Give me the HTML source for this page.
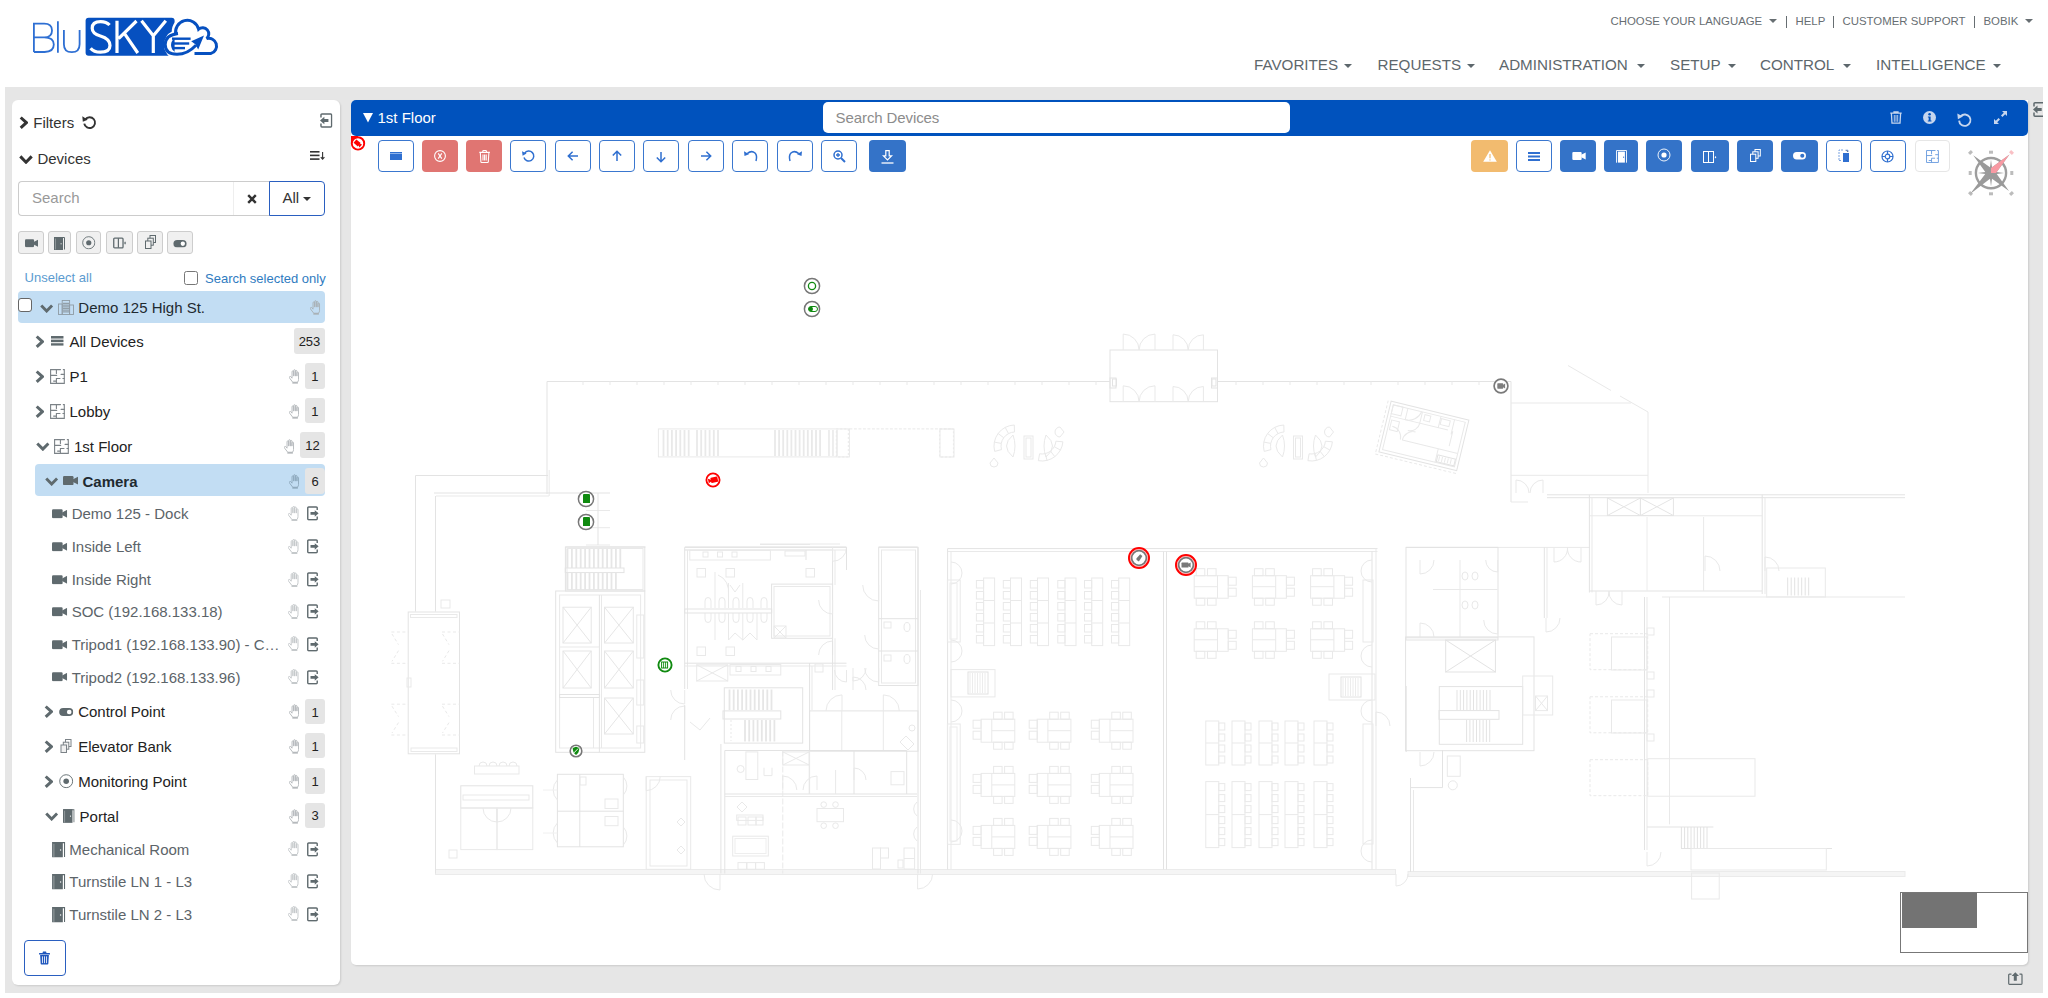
<!DOCTYPE html><html><head><meta charset="utf-8"><style>
*{box-sizing:border-box;margin:0;padding:0}
html,body{width:2048px;height:998px;overflow:hidden;background:#fff;font-family:"Liberation Sans",sans-serif;color:#333}
.a{position:absolute}
.t{position:absolute;white-space:nowrap;line-height:1}
.toplink{font-size:12px;color:#676e72;top:15px}
.nav{font-size:15px;color:#5d676c;top:57px}
.caret{position:absolute;width:0;height:0;border-left:4px solid transparent;border-right:4px solid transparent;border-top:4px solid #5d676c}
svg.i{position:absolute;overflow:visible}
.badge{position:absolute;background:#e5e5e5;border-radius:3px;font-size:13px;color:#222;text-align:center;line-height:26px;height:26px}
.tb{position:absolute;top:140px;width:36px;height:32px;border:1px solid #3b74c8;border-radius:4px;background:#fff}
.tbs{background:#3572c9;border-color:#3572c9}
.ib{position:absolute;top:231px;height:23px;background:#f0f0f0;border:1px solid #cdcdcd;border-radius:3px}
</style></head><body>

<svg width="0" height="0" style="position:absolute">
<defs>
<symbol id="chr" viewBox="0 0 9 13"><polyline points="1.7,1.3 7.4,6.5 1.7,11.7" fill="none" stroke="currentColor" stroke-width="3"/></symbol>
<symbol id="chd" viewBox="0 0 14 9"><polyline points="1.3,1.4 7,7.2 12.7,1.4" fill="none" stroke="currentColor" stroke-width="3"/></symbol>
<symbol id="cam" viewBox="0 0 15 9"><rect x="0" y="0" width="10.5" height="9" rx="1.2" fill="currentColor"/><path d="M10 3.2 L15 0.6 L15 8.4 L10 5.8Z" fill="currentColor"/></symbol>
<symbol id="lst" viewBox="0 0 13 10"><rect x="0" y="0" width="13" height="2.6" fill="currentColor"/><rect x="0" y="3.7" width="13" height="2.6" fill="currentColor"/><rect x="0" y="7.4" width="13" height="2.6" fill="currentColor"/></symbol>
<symbol id="flp" viewBox="0 0 15 15"><g fill="none" stroke="currentColor" stroke-width="1.1" stroke-linecap="round"><path d="M10.5 0.6H0.6V14.4H14.3V0.6H13.3"/><path d="M6.4 0.6V4.4M0.6 6.4H6.7M11.1 5.4H14.3M6.4 14.4V9.5H10M12.9 9.5H14.3M3.6 12.1H6.4"/></g></symbol>
<symbol id="hand" viewBox="0 0 11 15"><g fill="none" stroke="currentColor" stroke-width="1"><path d="M3.2 9 V2.6 Q3.2 1.6 4.05 1.6 Q4.9 1.6 4.9 2.6 V7.2 M4.9 6.8 V1.3 Q4.9 0.4 5.75 0.4 Q6.6 0.4 6.6 1.3 V7.2 M6.6 6.8 V1.9 Q6.6 1.1 7.45 1.1 Q8.3 1.1 8.3 1.9 V7.2 M8.3 7 V3.7 Q8.3 2.9 9.15 2.9 Q10 2.9 10 3.7 V10.6 Q10 12.2 9.1 13.2 M3.2 9.4 L2.3 8.1 Q1.4 7 0.6 7.7 Q0 8.3 0.7 9.3 L3.7 13.2"/></g><rect x="3.5" y="13" width="5.8" height="2" fill="currentColor"/></symbol>
<symbol id="sgn" viewBox="0 0 13 15"><path d="M10.8 4 V1.8 Q10.8 0.8 9.8 0.8 H1.8 Q0.8 0.8 0.8 1.8 V13.2 Q0.8 14.2 1.8 14.2 H9.8 Q10.8 14.2 10.8 13.2 V10.8" fill="none" stroke="currentColor" stroke-width="1.5"/><path d="M3.7 6.1 H8.2 V4.1 L12.3 7.5 L8.2 11 V8.9 H3.7Z" fill="currentColor"/></symbol><symbol id="sgnl" viewBox="0 0 13 15"><path d="M1 4.5 V1.8 Q1 0.8 2 0.8 H11 Q12 0.8 12 1.8 V13.2 Q12 14.2 11 14.2 H2 Q1 14.2 1 13.2 V10.5" fill="none" stroke="currentColor" stroke-width="1.5"/><path d="M0 7.5 L4.5 3.6 V6 H8.7 V9 H4.5 V11.4Z" fill="currentColor"/></symbol>
<symbol id="sgnr" viewBox="0 0 13 15"><path d="M5.2 0.8 H11.2 Q12.2 0.8 12.2 1.8 V13.2 Q12.2 14.2 11.2 14.2 H5.2 M3.4 0.8 H1.8 Q0.8 0.8 0.8 1.8 V4.8 M0.8 10.2 V13.2 Q0.8 14.2 1.8 14.2 H3.4" fill="none" stroke="currentColor" stroke-width="1.5"/><path d="M3 6.3 H6.8 V3.7 L11 7.5 L6.8 11.3 V8.7 H3Z" fill="currentColor"/></symbol>
<symbol id="tog" viewBox="0 0 14 8"><rect x="0" y="0" width="14" height="8" rx="4" fill="currentColor"/><circle cx="10" cy="4" r="2.3" fill="#fff"/></symbol>
<symbol id="dot" viewBox="0 0 14 14"><circle cx="7" cy="7" r="6.3" fill="none" stroke="currentColor" stroke-width="0.9"/><circle cx="7" cy="7" r="2.7" fill="currentColor"/></symbol>
<symbol id="door" viewBox="0 0 11 13"><path d="M0.5 0.5H10.5V12.5" fill="none" stroke="currentColor" stroke-width="1"/><rect x="0" y="0" width="9" height="13" fill="currentColor"/><path d="M1.5 1.5V12.5" stroke="#fff" stroke-width="0.6" opacity="0.5"/><rect x="6.6" y="6" width="1" height="1.4" fill="#fff" opacity="0.7"/></symbol>
<symbol id="elev" viewBox="0 0 14 12"><rect x="0.8" y="0.8" width="10" height="10.4" rx="1" fill="none" stroke="currentColor" stroke-width="1.4"/><path d="M5.8 0.8V11.2" stroke="currentColor" stroke-width="1.3"/><path d="M13 4L14 6L13 8L12 6Z" fill="currentColor"/></symbol>
<symbol id="clone" viewBox="0 0 11 14"><g fill="none" stroke="currentColor" stroke-width="1"><rect x="5" y="0.5" width="5.5" height="7"/><rect x="2.8" y="3.2" width="5.5" height="7" fill="#f0f0f0"/><rect x="0.5" y="6" width="5.5" height="7.5" fill="#f0f0f0"/></g></symbol>
<symbol id="bld" viewBox="0 0 16 15"><g fill="none" stroke="currentColor" stroke-width="0.9"><rect x="4.2" y="0.5" width="7.4" height="14"/><rect x="0.5" y="4" width="3.7" height="10.5"/><rect x="11.6" y="5" width="3.9" height="9.5"/><path d="M6 2.5V13M8 2.5V13M10 2.5V13M5 3.5H11M5 6H11M5 8.5H11M5 11H11"/></g></symbol>
<symbol id="times" viewBox="0 0 10 10"><path d="M1.2 1.2L8.8 8.8M8.8 1.2L1.2 8.8" stroke="currentColor" stroke-width="2.4"/></symbol>
<symbol id="refr" viewBox="0 0 15 14"><path d="M3.2 4.2 A5.3 5.3 0 1 1 2.2 8.4" fill="none" stroke="currentColor" stroke-width="1.9"/><path d="M0.3 1.2 L0.8 6.6 L5.6 4.6Z" fill="currentColor"/></symbol>
<symbol id="sort" viewBox="0 0 15 9"><g fill="currentColor"><rect x="0" y="0" width="9.5" height="1.6"/><rect x="0" y="3.6" width="9.5" height="1.6"/><rect x="0" y="7.3" width="9.5" height="1.6"/></g><path d="M12.6 1V8M10.8 6.2L12.6 8.2L14.4 6.2" fill="none" stroke="currentColor" stroke-width="1.1"/></symbol>
<symbol id="trash" viewBox="0 0 12 14"><g fill="currentColor"><rect x="0" y="1.6" width="12" height="1.6" rx="0.4"/><rect x="4" y="0" width="4" height="2" rx="0.5"/><path d="M1.2 3.8H10.8L10.2 13.2Q10.1 14 9.3 14H2.7Q1.9 14 1.8 13.2Z"/></g><g stroke="#fff" stroke-width="0.9"><path d="M3.8 5.2V12.6M6 5.2V12.6M8.2 5.2V12.6"/></g></symbol>
</defs></svg>

<svg class="i" style="left:0;top:0" width="230" height="70" viewBox="0 0 230 70">
<g fill="none" stroke="#2e6fd3" stroke-width="1.8">
<path d="M33.9 52 V23.6 H44.2 Q52 23.6 52 30.4 Q52 37.3 44.2 37.3 H33.9 M44.2 37.3 Q53.8 37.3 53.8 44.6 Q53.8 52 44.6 52 H33.9"/>
<path d="M57.9 21.3 V52.7"/>
<path d="M63.9 30.1 V44.2 Q63.9 52.2 71.8 52.2 Q79.6 52.2 79.6 44.2 V30.1"/>
</g>
<rect x="85.6" y="17.7" width="89" height="38" rx="3" fill="#0650c0"/>
<g fill="none" stroke="#fff" stroke-width="3.2">
<path d="M109.6 25 Q106.4 21.6 100.6 21.6 Q92.2 21.6 92.2 28.2 Q92.2 33.6 100.4 36 Q110 38.8 110 45.6 Q110 52.2 100.4 52.2 Q93.8 52.2 90.6 48.2"/>
<path d="M117 20.8 V53 M136.5 21 L118.6 38.6 M124.2 33.2 L137.8 53"/>
<path d="M141.5 20.8 L153.3 35.8 V53 M165.8 20.8 L153.3 35.8"/>
</g>
<g fill="none" stroke="#fff" stroke-width="7">
<path d="M175.8 34.5 A11.2 11.2 0 0 1 198 28"/>
<path d="M176.5 33.5 A11.8 11.8 0 1 0 190 50"/>
</g>
<g fill="none" stroke="#0650c0" stroke-width="3">
<path d="M175.9 34.8 A11.2 11.2 0 0 1 198.6 29.2 A5 5 0 0 1 206.6 38.6 A6.3 6.3 0 0 1 211 53.4 H194.5"/>
<path d="M178 33.4 Q165.2 35 165.2 44.5 Q165.2 54.3 177 54.3 Q187.5 54.3 196 45.2"/>
</g>
<g fill="#0650c0">
<path d="M204 35.6 L191.2 41.2 L195.3 44.2 L198.2 49.5Z"/>
<rect x="172" y="37.5" width="18.6" height="2.4"/><rect x="172" y="42.3" width="17.2" height="2.4"/><rect x="172" y="46.9" width="13" height="2.4"/>
</g>
</svg>
<div class="t" style="left:1610.5px;top:15.9px;font-size:11.4px;color:#676e72;font-weight:normal;">CHOOSE YOUR LANGUAGE</div>
<div class="caret" style="left:1769px;top:19px;border-top-color:#676e72"></div>
<div class="a" style="left:1785.5px;top:15.5px;width:1px;height:12px;background:#676e72"></div>
<div class="t" style="left:1795.5px;top:15.9px;font-size:11.4px;color:#676e72;font-weight:normal;">HELP</div>
<div class="a" style="left:1832.5px;top:15.5px;width:1px;height:12px;background:#676e72"></div>
<div class="t" style="left:1842.5px;top:15.9px;font-size:11.4px;color:#676e72;font-weight:normal;">CUSTOMER SUPPORT</div>
<div class="a" style="left:1974px;top:15.5px;width:1px;height:12px;background:#676e72"></div>
<div class="t" style="left:1983.5px;top:15.9px;font-size:11.4px;color:#676e72;font-weight:normal;">BOBIK</div>
<div class="caret" style="left:2025px;top:19px;border-top-color:#676e72"></div>
<div class="t" style="left:1254px;top:57.1px;font-size:15.2px;color:#5d676c;font-weight:normal;">FAVORITES</div>
<div class="caret" style="left:1344px;top:64px;border-top-color:#5d676c"></div>
<div class="t" style="left:1377.5px;top:57.1px;font-size:15.2px;color:#5d676c;font-weight:normal;">REQUESTS</div>
<div class="caret" style="left:1467px;top:64px;border-top-color:#5d676c"></div>
<div class="t" style="left:1499px;top:57.1px;font-size:15.2px;color:#5d676c;font-weight:normal;">ADMINISTRATION</div>
<div class="caret" style="left:1637px;top:64px;border-top-color:#5d676c"></div>
<div class="t" style="left:1670px;top:57.1px;font-size:15.2px;color:#5d676c;font-weight:normal;">SETUP</div>
<div class="caret" style="left:1728px;top:64px;border-top-color:#5d676c"></div>
<div class="t" style="left:1760px;top:57.1px;font-size:15.2px;color:#5d676c;font-weight:normal;">CONTROL</div>
<div class="caret" style="left:1843px;top:64px;border-top-color:#5d676c"></div>
<div class="t" style="left:1876px;top:57.1px;font-size:15.2px;color:#5d676c;font-weight:normal;">INTELLIGENCE</div>
<div class="caret" style="left:1993px;top:64px;border-top-color:#5d676c"></div>
<div class="a" style="left:5px;top:87px;width:2038px;height:906px;background:#e6e6e6"></div>
<div class="a" style="left:12px;top:100px;width:328px;height:885px;background:#fff;border-radius:6px;box-shadow:1px 1px 2px rgba(0,0,0,.12)"></div>
<svg class="i" style="left:18.6px;top:115.6px;color:#333" width="9" height="13.4"><use href="#chr"/></svg>
<div class="t" style="left:33.3px;top:115.2px;font-size:15px;color:#333;font-weight:normal;">Filters</div>
<svg class="i" style="left:81.8px;top:115px;color:#333" width="15.4" height="14.4"><use href="#refr"/></svg>
<svg class="i" style="left:320px;top:113px;color:#5f6a6e" width="12.6" height="15"><use href="#sgnl"/></svg>
<svg class="i" style="left:19px;top:155px;color:#333" width="14" height="9"><use href="#chd"/></svg>
<div class="t" style="left:37.4px;top:151.0px;font-size:15px;color:#333;font-weight:normal;">Devices</div>
<svg class="i" style="left:310px;top:151px;color:#333" width="15" height="9"><use href="#sort"/></svg>
<div class="a" style="left:18px;top:180.5px;width:252px;height:35px;border:1px solid #ccc;border-right:none;border-radius:4px 0 0 4px;background:#fff"></div>
<div class="a" style="left:233px;top:181.5px;width:1px;height:33px;background:#eee"></div>
<div class="t" style="left:32px;top:189.7px;font-size:15px;color:#999;font-weight:normal;">Search</div>
<svg class="i" style="left:246.5px;top:193.5px;color:#333" width="10" height="10"><use href="#times"/></svg>
<div class="a" style="left:269px;top:180.5px;width:56px;height:35px;border:1px solid #2a5fc0;border-radius:0 4px 4px 0;background:#fff"></div>
<div class="t" style="left:282.5px;top:189.9px;font-size:15px;color:#333;font-weight:normal;">All</div>
<div class="caret" style="left:303px;top:197px;border-top-color:#333;border-width:4px 4px 0 4px"></div>
<div class="ib" style="left:18px;width:26px"></div>
<div class="ib" style="left:48px;width:23px"></div>
<div class="ib" style="left:76px;width:25px"></div>
<div class="ib" style="left:106px;width:27px"></div>
<div class="ib" style="left:137px;width:26px"></div>
<div class="ib" style="left:167px;width:25.5px"></div>
<svg class="i" style="left:24.5px;top:238.5px;color:#5f6a6e" width="13" height="8.5"><use href="#cam"/></svg>
<svg class="i" style="left:54px;top:237px;color:#5f6a6e" width="11" height="13"><use href="#door"/></svg>
<svg class="i" style="left:81.5px;top:235.5px;color:#5f6a6e" width="13.5" height="13.5"><use href="#dot"/></svg>
<svg class="i" style="left:113px;top:237px;color:#5f6a6e" width="13" height="12"><use href="#elev"/></svg>
<svg class="i" style="left:144.5px;top:235px;color:#5f6a6e" width="11" height="14"><use href="#clone"/></svg>
<svg class="i" style="left:172.5px;top:239.5px;color:#5f6a6e" width="14" height="7.5"><use href="#tog"/></svg>
<div class="t" style="left:24.6px;top:271.2px;font-size:13px;color:#5b9bd0;font-weight:normal;">Unselect all</div>
<div class="a" style="left:183.5px;top:271px;width:14px;height:14px;border:1px solid #777;border-radius:2.5px;background:#fff"></div>
<div class="t" style="left:205px;top:271.7px;font-size:13px;color:#2f7bbf;font-weight:normal;">Search selected only</div>
<div class="a" style="left:18px;top:291px;width:307px;height:31.5px;background:#c2ddf3;border-radius:4px"></div>
<div class="a" style="left:18px;top:298.3px;width:13.5px;height:13.5px;border:1px solid #666;border-radius:3px;background:#fff"></div>
<svg class="i" style="left:40px;top:304px;color:#5f6a6e" width="13.3" height="9"><use href="#chd"/></svg>
<svg class="i" style="left:58.2px;top:300.2px;color:#8f9ba4" width="16" height="15"><use href="#bld"/></svg>
<div class="t" style="left:78.3px;top:299.9px;font-size:15px;color:#1f2a30;font-weight:normal;">Demo 125 High St.</div>
<svg class="i" style="left:309.5px;top:299.5px;color:#a9b1b6" width="10.5" height="15"><use href="#hand"/></svg>
<svg class="i" style="left:35.3px;top:334.8px;color:#5f6a6e" width="9" height="13.4"><use href="#chr"/></svg>
<svg class="i" style="left:51.2px;top:336.3px;color:#5f6a6e" width="12.7" height="9.8"><use href="#lst"/></svg>
<div class="t" style="left:69.5px;top:333.7px;font-size:15px;color:#222;font-weight:normal;">All Devices</div>
<div class="badge" style="left:294px;top:328px;width:31px;height:25.69999999999999px;line-height:27.19999999999999px">253</div>
<svg class="i" style="left:35.2px;top:370.2px;color:#5f6a6e" width="9" height="13.4"><use href="#chr"/></svg>
<svg class="i" style="left:50px;top:369.29999999999995px;color:#7b8287" width="15" height="15"><use href="#flp"/></svg>
<div class="t" style="left:69.5px;top:369.4px;font-size:15px;color:#222;font-weight:normal;">P1</div>
<svg class="i" style="left:288.6px;top:369.4px;color:#b5b9bc" width="10.5" height="15"><use href="#hand"/></svg>
<div class="badge" style="left:304.7px;top:362.9px;width:20.30000000000001px;height:25.69999999999999px;line-height:27.19999999999999px">1</div>
<svg class="i" style="left:35.2px;top:405.1px;color:#5f6a6e" width="9" height="13.4"><use href="#chr"/></svg>
<svg class="i" style="left:50px;top:404.2px;color:#7b8287" width="15" height="15"><use href="#flp"/></svg>
<div class="t" style="left:69.5px;top:404.3px;font-size:15px;color:#222;font-weight:normal;">Lobby</div>
<svg class="i" style="left:288.6px;top:404.3px;color:#b5b9bc" width="10.5" height="15"><use href="#hand"/></svg>
<div class="badge" style="left:304.7px;top:397.7px;width:20.30000000000001px;height:25.69999999999999px;line-height:27.19999999999999px">1</div>
<svg class="i" style="left:35.6px;top:442.4px;color:#5f6a6e" width="13.7" height="9"><use href="#chd"/></svg>
<svg class="i" style="left:54px;top:439.29999999999995px;color:#7b8287" width="15" height="15"><use href="#flp"/></svg>
<div class="t" style="left:74px;top:439.4px;font-size:15px;color:#222;font-weight:normal;">1st Floor</div>
<svg class="i" style="left:283.8px;top:439.4px;color:#b5b9bc" width="10.5" height="15"><use href="#hand"/></svg>
<div class="badge" style="left:300px;top:432.4px;width:25px;height:26.0px;line-height:27.5px">12</div>
<div class="a" style="left:35.4px;top:464.4px;width:289.6px;height:32px;background:#c2ddf3;border-radius:4px"></div>
<svg class="i" style="left:44.5px;top:477.0px;color:#5f6a6e" width="13.3" height="9"><use href="#chd"/></svg>
<svg class="i" style="left:63px;top:476.4px;color:#5f6a6e" width="15" height="9.2"><use href="#cam"/></svg>
<div class="t" style="left:82.5px;top:473.7px;font-size:15px;color:#1f2a30;font-weight:bold;">Camera</div>
<svg class="i" style="left:288.6px;top:473.7px;color:#8fa9bd" width="10.5" height="15"><use href="#hand"/></svg>
<div class="badge" style="left:305px;top:468px;width:20px;height:25.5px;line-height:27px;border-radius:3px 4px 4px 3px">6</div>
<svg class="i" style="left:51.7px;top:508.7px;color:#5f6a6e" width="15.2" height="9.5"><use href="#cam"/></svg>
<div class="t" style="left:71.7px;top:506.0px;font-size:15px;color:#5c6469;font-weight:normal;">Demo 125 - Dock</div>
<svg class="i" style="left:288.2px;top:505.5px;color:#c5c9cb" width="11" height="15"><use href="#hand"/></svg>
<svg class="i" style="left:306.9px;top:506.0px;color:#5f6a6e" width="12.3" height="14.7"><use href="#sgn"/></svg>
<svg class="i" style="left:51.7px;top:541.8000000000001px;color:#5f6a6e" width="15.2" height="9.5"><use href="#cam"/></svg>
<div class="t" style="left:71.7px;top:539.1px;font-size:15px;color:#5c6469;font-weight:normal;">Inside Left</div>
<svg class="i" style="left:288.2px;top:538.6px;color:#c5c9cb" width="11" height="15"><use href="#hand"/></svg>
<svg class="i" style="left:306.9px;top:539.1px;color:#5f6a6e" width="12.3" height="14.7"><use href="#sgn"/></svg>
<svg class="i" style="left:51.7px;top:574.7px;color:#5f6a6e" width="15.2" height="9.5"><use href="#cam"/></svg>
<div class="t" style="left:71.7px;top:572.0px;font-size:15px;color:#5c6469;font-weight:normal;">Inside Right</div>
<svg class="i" style="left:288.2px;top:571.5px;color:#c5c9cb" width="11" height="15"><use href="#hand"/></svg>
<svg class="i" style="left:306.9px;top:572.0px;color:#5f6a6e" width="12.3" height="14.7"><use href="#sgn"/></svg>
<svg class="i" style="left:51.7px;top:606.9000000000001px;color:#5f6a6e" width="15.2" height="9.5"><use href="#cam"/></svg>
<div class="t" style="left:71.7px;top:604.2px;font-size:15px;color:#5c6469;font-weight:normal;">SOC (192.168.133.18)</div>
<svg class="i" style="left:288.2px;top:603.7px;color:#c5c9cb" width="11" height="15"><use href="#hand"/></svg>
<svg class="i" style="left:306.9px;top:604.2px;color:#5f6a6e" width="12.3" height="14.7"><use href="#sgn"/></svg>
<svg class="i" style="left:51.7px;top:639.6px;color:#5f6a6e" width="15.2" height="9.5"><use href="#cam"/></svg>
<div class="t" style="left:71.7px;top:636.9px;font-size:15px;color:#5c6469;font-weight:normal;">Tripod1 (192.168.133.90) - C…</div>
<svg class="i" style="left:288.2px;top:636.4px;color:#c5c9cb" width="11" height="15"><use href="#hand"/></svg>
<svg class="i" style="left:306.9px;top:636.9px;color:#5f6a6e" width="12.3" height="14.7"><use href="#sgn"/></svg>
<svg class="i" style="left:51.7px;top:672.2px;color:#5f6a6e" width="15.2" height="9.5"><use href="#cam"/></svg>
<div class="t" style="left:71.7px;top:669.5px;font-size:15px;color:#5c6469;font-weight:normal;">Tripod2 (192.168.133.96)</div>
<svg class="i" style="left:288.2px;top:669px;color:#c5c9cb" width="11" height="15"><use href="#hand"/></svg>
<svg class="i" style="left:306.9px;top:669.5px;color:#5f6a6e" width="12.3" height="14.7"><use href="#sgn"/></svg>
<svg class="i" style="left:43.8px;top:705.0999999999999px;color:#5f6a6e" width="9" height="13.4"><use href="#chr"/></svg>
<svg class="i" style="left:59px;top:707.8px;color:#5f6a6e" width="14.4" height="8"><use href="#tog"/></svg>
<div class="t" style="left:78.2px;top:704.3px;font-size:15px;color:#222;font-weight:normal;">Control Point</div>
<svg class="i" style="left:288.6px;top:704.3px;color:#b5b9bc" width="10.5" height="15"><use href="#hand"/></svg>
<div class="badge" style="left:305px;top:698.5px;width:20px;height:25.5px;line-height:27.0px">1</div>
<svg class="i" style="left:43.8px;top:739.6999999999999px;color:#5f6a6e" width="9" height="13.4"><use href="#chr"/></svg>
<svg class="i" style="left:60px;top:739.4px;color:#7b8287" width="12" height="14"><use href="#clone"/></svg>
<div class="t" style="left:78.2px;top:738.9px;font-size:15px;color:#222;font-weight:normal;">Elevator Bank</div>
<svg class="i" style="left:288.6px;top:738.9px;color:#b5b9bc" width="10.5" height="15"><use href="#hand"/></svg>
<div class="badge" style="left:305px;top:732.8px;width:20px;height:25.5px;line-height:27.0px">1</div>
<svg class="i" style="left:43.8px;top:774.9px;color:#5f6a6e" width="9" height="13.4"><use href="#chr"/></svg>
<svg class="i" style="left:59px;top:774.4px;color:#5f6a6e" width="14.4" height="14.4"><use href="#dot"/></svg>
<div class="t" style="left:78.2px;top:774.1px;font-size:15px;color:#222;font-weight:normal;">Monitoring Point</div>
<svg class="i" style="left:288.6px;top:774.1px;color:#b5b9bc" width="10.5" height="15"><use href="#hand"/></svg>
<div class="badge" style="left:305px;top:768px;width:20px;height:25.5px;line-height:27.0px">1</div>
<svg class="i" style="left:44.5px;top:811.8px;color:#5f6a6e" width="13.3" height="9"><use href="#chd"/></svg>
<svg class="i" style="left:63px;top:808.8px;color:#5f6a6e" width="11.6" height="14"><use href="#door"/></svg>
<div class="t" style="left:79.6px;top:808.5px;font-size:15px;color:#222;font-weight:normal;">Portal</div>
<svg class="i" style="left:288.6px;top:808.5px;color:#b5b9bc" width="10.5" height="15"><use href="#hand"/></svg>
<div class="badge" style="left:305px;top:802.5px;width:20px;height:25.200000000000045px;line-height:26.700000000000045px">3</div>
<svg class="i" style="left:51.7px;top:841.5px;color:#5f6a6e" width="13.3" height="15.5"><use href="#door"/></svg>
<div class="t" style="left:69.3px;top:841.5px;font-size:15px;color:#5c6469;font-weight:normal;">Mechanical Room</div>
<svg class="i" style="left:288.2px;top:841px;color:#c5c9cb" width="11" height="15"><use href="#hand"/></svg>
<svg class="i" style="left:306.9px;top:841.5px;color:#5f6a6e" width="12.3" height="14.7"><use href="#sgn"/></svg>
<svg class="i" style="left:51.7px;top:873.9px;color:#5f6a6e" width="13.3" height="15.5"><use href="#door"/></svg>
<div class="t" style="left:69.3px;top:873.9px;font-size:15px;color:#5c6469;font-weight:normal;">Turnstile LN 1 - L3</div>
<svg class="i" style="left:288.2px;top:873.4px;color:#c5c9cb" width="11" height="15"><use href="#hand"/></svg>
<svg class="i" style="left:306.9px;top:873.9px;color:#5f6a6e" width="12.3" height="14.7"><use href="#sgn"/></svg>
<svg class="i" style="left:51.7px;top:906.5px;color:#5f6a6e" width="13.3" height="15.5"><use href="#door"/></svg>
<div class="t" style="left:69.3px;top:906.5px;font-size:15px;color:#5c6469;font-weight:normal;">Turnstile LN 2 - L3</div>
<svg class="i" style="left:288.2px;top:906px;color:#c5c9cb" width="11" height="15"><use href="#hand"/></svg>
<svg class="i" style="left:306.9px;top:906.5px;color:#5f6a6e" width="12.3" height="14.7"><use href="#sgn"/></svg>
<div class="a" style="left:24px;top:940.3px;width:42px;height:36px;border:1px solid #2a5fc0;border-radius:4px;background:#fff"></div>
<svg class="i" style="left:39px;top:950.5px;color:#1f56bd" width="11" height="14"><use href="#trash"/></svg>
<div class="a" style="left:351px;top:100px;width:1677px;height:865px;background:#fff;border-radius:5px 0 5px 5px;box-shadow:1px 1px 2px rgba(0,0,0,.12)"></div>
<svg class="i" style="left:0;top:0" width="2048" height="998" viewBox="0 0 2048 998"><g fill="none" stroke="#e5e5e5" stroke-width="1" shape-rendering="geometricPrecision"><path d="M547 381.5 L1110 381.5" stroke="#e3e3e3"/><path d="M1217.5 381.5 L1511 381.5" stroke="#e3e3e3"/><path d="M583 381.5 L583 385" stroke="#e9e9e9"/><path d="M610 381.5 L610 385" stroke="#e9e9e9"/><path d="M637 381.5 L637 385" stroke="#e9e9e9"/><path d="M664 381.5 L664 385" stroke="#e9e9e9"/><path d="M691 381.5 L691 385" stroke="#e9e9e9"/><path d="M718 381.5 L718 385" stroke="#e9e9e9"/><path d="M745 381.5 L745 385" stroke="#e9e9e9"/><path d="M772 381.5 L772 385" stroke="#e9e9e9"/><path d="M799 381.5 L799 385" stroke="#e9e9e9"/><path d="M826 381.5 L826 385" stroke="#e9e9e9"/><path d="M853 381.5 L853 385" stroke="#e9e9e9"/><path d="M880 381.5 L880 385" stroke="#e9e9e9"/><path d="M907 381.5 L907 385" stroke="#e9e9e9"/><path d="M934 381.5 L934 385" stroke="#e9e9e9"/><path d="M961 381.5 L961 385" stroke="#e9e9e9"/><path d="M988 381.5 L988 385" stroke="#e9e9e9"/><path d="M1015 381.5 L1015 385" stroke="#e9e9e9"/><path d="M1042 381.5 L1042 385" stroke="#e9e9e9"/><path d="M1069 381.5 L1069 385" stroke="#e9e9e9"/><path d="M1096 381.5 L1096 385" stroke="#e9e9e9"/><path d="M1236 381.5 L1236 385" stroke="#e9e9e9"/><path d="M1263 381.5 L1263 385" stroke="#e9e9e9"/><path d="M1290 381.5 L1290 385" stroke="#e9e9e9"/><path d="M1317 381.5 L1317 385" stroke="#e9e9e9"/><path d="M1344 381.5 L1344 385" stroke="#e9e9e9"/><path d="M1371 381.5 L1371 385" stroke="#e9e9e9"/><path d="M1398 381.5 L1398 385" stroke="#e9e9e9"/><path d="M1425 381.5 L1425 385" stroke="#e9e9e9"/><path d="M1452 381.5 L1452 385" stroke="#e9e9e9"/><path d="M1479 381.5 L1479 385" stroke="#e9e9e9"/><rect x="1110" y="350" width="107.5" height="51.7" stroke="#e3e3e3"/><rect x="1112.5" y="379" width="4" height="7" stroke="#e3e3e3"/><rect x="1212" y="379" width="4" height="7" stroke="#e3e3e3"/><path d="M1123.2 350 L1123.2 334.10000000000014" stroke="#e9e9e9"/><path d="M1155 350 L1155 334.10000000000014" stroke="#e9e9e9"/><path d="M1123.2 334.10000000000014 A15.899999999999864 15.899999999999864 0 0 1 1139.1 350" stroke="#e9e9e9"/><path d="M1155 334.10000000000014 A15.899999999999864 15.899999999999864 0 0 0 1139.1 350" stroke="#e9e9e9"/><path d="M1123.2 401.7 L1123.2 385.8000000000001" stroke="#e9e9e9"/><path d="M1155 401.7 L1155 385.8000000000001" stroke="#e9e9e9"/><path d="M1123.2 385.8000000000001 A15.899999999999864 15.899999999999864 0 0 1 1139.1 401.7" stroke="#e9e9e9"/><path d="M1155 385.8000000000001 A15.899999999999864 15.899999999999864 0 0 0 1139.1 401.7" stroke="#e9e9e9"/><path d="M1173 350 L1173 334.79999999999995" stroke="#e9e9e9"/><path d="M1203.4 350 L1203.4 334.79999999999995" stroke="#e9e9e9"/><path d="M1173 334.79999999999995 A15.200000000000045 15.200000000000045 0 0 1 1188.2 350" stroke="#e9e9e9"/><path d="M1203.4 334.79999999999995 A15.200000000000045 15.200000000000045 0 0 0 1188.2 350" stroke="#e9e9e9"/><path d="M1173 401.7 L1173 386.49999999999994" stroke="#e9e9e9"/><path d="M1203.4 401.7 L1203.4 386.49999999999994" stroke="#e9e9e9"/><path d="M1173 386.49999999999994 A15.200000000000045 15.200000000000045 0 0 1 1188.2 401.7" stroke="#e9e9e9"/><path d="M1203.4 386.49999999999994 A15.200000000000045 15.200000000000045 0 0 0 1188.2 401.7" stroke="#e9e9e9"/><rect x="1110" y="378" width="6" height="10" stroke="#e3e3e3"/><rect x="1211.5" y="378" width="6" height="10" stroke="#e3e3e3"/><path d="M547 381.5 L547 494" stroke="#e3e3e3"/><path d="M549.2 470 L549.2 496" stroke="#e9e9e9"/><path d="M415.5 475.5 L548 475.5" stroke="#e3e3e3"/><path d="M415.5 475.5 L415.5 611.5" stroke="#e3e3e3"/><path d="M434 493 L610 493" stroke="#e3e3e3"/><path d="M436 496 L549 496" stroke="#e9e9e9"/><path d="M586 510.5 L610 510.5" stroke="#e9e9e9"/><path d="M586 527.7 L610 527.7" stroke="#e9e9e9"/><path d="M586 545 L610 545" stroke="#e9e9e9"/><path d="M598 493 L598 545" stroke="#e3e3e3"/><path d="M1511 381.5 L1511 502" stroke="#e3e3e3"/><path d="M1511 403 L1631 403" stroke="#e9e9e9"/><path d="M1568 365.5 L1611 390.5" stroke="#e9e9e9"/><path d="M1620 396 L1648 412" stroke="#e9e9e9"/><path d="M1648 412 L1648 493" stroke="#e9e9e9"/><path d="M1511 475.3 L1648 475.3" stroke="#e9e9e9"/><path d="M1516 493 L1516 480" stroke="#e9e9e9"/><path d="M1516 480 A13 13 0 0 1 1529 493" stroke="#e9e9e9"/><path d="M1543 493 L1543 480" stroke="#e9e9e9"/><path d="M1543 480 A13 13 0 0 0 1530 493" stroke="#e9e9e9"/><path d="M1547 494.8 L1905 494.8" stroke="#e3e3e3"/><path d="M1547 497.7 L1905 497.7" stroke="#e3e3e3"/><path d="M1511 502 L1528 502" stroke="#e9e9e9"/><rect x="435.5" y="869.5" width="960" height="5" fill="#f5f5f5" stroke="#ebebeb"/><rect x="1408" y="871.5" width="497" height="5" fill="#f5f5f5" stroke="#ebebeb"/><path d="M720 874 L720 890" stroke="#e9e9e9"/><path d="M720 890 A16 16 0 0 1 704 874" stroke="#e9e9e9"/><path d="M917.6 874 L917.6 889" stroke="#e9e9e9"/><path d="M917.6 889 A15 15 0 0 0 932.6 874" stroke="#e9e9e9"/><path d="M1396 874 L1396 886" stroke="#e9e9e9"/><path d="M1396 886 A12 12 0 0 0 1408 874" stroke="#e9e9e9"/><path d="M435.5 496 L435.5 611.6" stroke="#e3e3e3"/><path d="M435.5 754.3 L435.5 873.5" stroke="#e3e3e3"/><rect x="408.2" y="612" width="51.3" height="141.8" stroke="#e3e3e3"/><rect x="410.5" y="614.5" width="46.5" height="3" stroke="#e9e9e9"/><rect x="411" y="748" width="46" height="3.5" stroke="#e9e9e9"/><rect x="407" y="678" width="4" height="9" stroke="#e9e9e9"/><path d="M391.4 632 L408.2 632" stroke="#e9e9e9" stroke-dasharray="3 2.5"/><path d="M391.4 663.3 L408.2 663.3" stroke="#e9e9e9" stroke-dasharray="3 2.5"/><path d="M392 634 L398.5 644.65" stroke="#e9e9e9" stroke-dasharray="3 2.5"/><path d="M398.5 650.65 L392 661.3" stroke="#e9e9e9" stroke-dasharray="3 2.5"/><path d="M442 632 L459.5 632" stroke="#e9e9e9" stroke-dasharray="3 2.5"/><path d="M442 663.3 L459.5 663.3" stroke="#e9e9e9" stroke-dasharray="3 2.5"/><path d="M442.5 634 L449 644.65" stroke="#e9e9e9" stroke-dasharray="3 2.5"/><path d="M449 650.65 L442.5 661.3" stroke="#e9e9e9" stroke-dasharray="3 2.5"/><path d="M391.4 704.2 L408.2 704.2" stroke="#e9e9e9" stroke-dasharray="3 2.5"/><path d="M391.4 735 L408.2 735" stroke="#e9e9e9" stroke-dasharray="3 2.5"/><path d="M392 706.2 L398.5 716.6" stroke="#e9e9e9" stroke-dasharray="3 2.5"/><path d="M398.5 722.6 L392 733" stroke="#e9e9e9" stroke-dasharray="3 2.5"/><path d="M442 704.2 L459.5 704.2" stroke="#e9e9e9" stroke-dasharray="3 2.5"/><path d="M442 735 L459.5 735" stroke="#e9e9e9" stroke-dasharray="3 2.5"/><path d="M442.5 706.2 L449 716.6" stroke="#e9e9e9" stroke-dasharray="3 2.5"/><path d="M449 722.6 L442.5 733" stroke="#e9e9e9" stroke-dasharray="3 2.5"/><rect x="441" y="600" width="9" height="8" stroke="#e9e9e9"/><rect x="658.4" y="428.9" width="191" height="28" stroke="#e9e9e9"/><path d="M849.4 428.9 L953.4 428.9" stroke="#e9e9e9" stroke-dasharray="3 1.5"/><path d="M663.5 430V456" stroke="#e9e9e9" stroke-width="1.8"/><path d="M667.7 430V456" stroke="#e9e9e9" stroke-width="1.8"/><path d="M671.9 430V456" stroke="#e9e9e9" stroke-width="1.8"/><path d="M676.1 430V456" stroke="#e9e9e9" stroke-width="1.8"/><path d="M680.3 430V456" stroke="#e9e9e9" stroke-width="1.8"/><path d="M684.5 430V456" stroke="#e9e9e9" stroke-width="1.8"/><path d="M688.7 430V456" stroke="#e9e9e9" stroke-width="1.8"/><path d="M697.0 430V456" stroke="#e9e9e9" stroke-width="1.8"/><path d="M701.2 430V456" stroke="#e9e9e9" stroke-width="1.8"/><path d="M705.4 430V456" stroke="#e9e9e9" stroke-width="1.8"/><path d="M709.6 430V456" stroke="#e9e9e9" stroke-width="1.8"/><path d="M713.8 430V456" stroke="#e9e9e9" stroke-width="1.8"/><path d="M718.0 430V456" stroke="#e9e9e9" stroke-width="1.8"/><path d="M775.0 430V456" stroke="#e9e9e9" stroke-width="1.8"/><path d="M779.1 430V456" stroke="#e9e9e9" stroke-width="1.8"/><path d="M783.2 430V456" stroke="#e9e9e9" stroke-width="1.8"/><path d="M787.3 430V456" stroke="#e9e9e9" stroke-width="1.8"/><path d="M791.4 430V456" stroke="#e9e9e9" stroke-width="1.8"/><path d="M795.5 430V456" stroke="#e9e9e9" stroke-width="1.8"/><path d="M799.6 430V456" stroke="#e9e9e9" stroke-width="1.8"/><path d="M803.7 430V456" stroke="#e9e9e9" stroke-width="1.8"/><path d="M807.8 430V456" stroke="#e9e9e9" stroke-width="1.8"/><path d="M811.9 430V456" stroke="#e9e9e9" stroke-width="1.8"/><path d="M816.0 430V456" stroke="#e9e9e9" stroke-width="1.8"/><path d="M820.1 430V456" stroke="#e9e9e9" stroke-width="1.8"/><path d="M829.0 430V456" stroke="#ececec" stroke-width="1.8"/><path d="M833.0 430V456" stroke="#ececec" stroke-width="1.8"/><path d="M837.0 430V456" stroke="#ececec" stroke-width="1.8"/><rect x="836.3" y="429" width="12" height="28" stroke="#e9e9e9" stroke-dasharray="2 2"/><rect x="939.7" y="429" width="13.7" height="28" stroke="#e9e9e9" stroke-dasharray="2 2"/><path d="M1014.3 425.0 A21 21 0 0 0 994.7 451.4 L1001.5 449.6 A14 14 0 0 1 1014.5 432.0Z" stroke="#e9e9e9"/><path d="M1008.5 433.6 L1005.2 427.4" stroke="#e9e9e9"/><path d="M1003.7 437.7 L998.1 433.5" stroke="#e9e9e9"/><path d="M1001.2 443.4 L994.4 442.1" stroke="#e9e9e9"/><path d="M1013 435 Q1000 446 1013 457 Q1017 446 1013 435Z" stroke="#e9e9e9"/><path d="M990 463 l4 -5 l4 5 a4 4 0 0 1 -8 0Z" stroke="#e9e9e9"/><rect x="1024" y="436" width="9" height="23" stroke="#e9e9e9"/><rect x="1026" y="438" width="5" height="19" stroke="#e9e9e9"/><path d="M1062.9 441.8 A21 21 0 0 1 1038.4 460.7 L1039.6 453.8 A14 14 0 0 0 1055.9 441.2Z" stroke="#e9e9e9"/><path d="M1054.3 446.7 L1060.4 450.1" stroke="#e9e9e9"/><path d="M1050.5 451.1 L1054.8 456.7" stroke="#e9e9e9"/><path d="M1045.3 453.6 L1047.0 460.4" stroke="#e9e9e9"/><path d="M1046 435 Q1059 446 1046 457 Q1042 446 1046 435Z" stroke="#e9e9e9"/><path d="M1060 427 l4 5 l-4 5 a4 4 0 0 1 0 -10Z" stroke="#e9e9e9"/><path d="M1283.8 425.0 A21 21 0 0 0 1264.2 451.4 L1271.0 449.6 A14 14 0 0 1 1284.0 432.0Z" stroke="#e9e9e9"/><path d="M1278.0 433.6 L1274.7 427.4" stroke="#e9e9e9"/><path d="M1273.2 437.7 L1267.6 433.5" stroke="#e9e9e9"/><path d="M1270.7 443.4 L1263.9 442.1" stroke="#e9e9e9"/><path d="M1282.5 435 Q1269.5 446 1282.5 457 Q1286.5 446 1282.5 435Z" stroke="#e9e9e9"/><path d="M1259.5 463 l4 -5 l4 5 a4 4 0 0 1 -8 0Z" stroke="#e9e9e9"/><rect x="1293.5" y="436" width="9" height="23" stroke="#e9e9e9"/><rect x="1295.5" y="438" width="5" height="19" stroke="#e9e9e9"/><path d="M1332.4 441.8 A21 21 0 0 1 1307.9 460.7 L1309.1 453.8 A14 14 0 0 0 1325.4 441.2Z" stroke="#e9e9e9"/><path d="M1323.8 446.7 L1329.9 450.1" stroke="#e9e9e9"/><path d="M1320.0 451.1 L1324.3 456.7" stroke="#e9e9e9"/><path d="M1314.8 453.6 L1316.5 460.4" stroke="#e9e9e9"/><path d="M1315.5 435 Q1328.5 446 1315.5 457 Q1311.5 446 1315.5 435Z" stroke="#e9e9e9"/><path d="M1329.5 427 l4 5 l-4 5 a4 4 0 0 1 0 -10Z" stroke="#e9e9e9"/><rect x="940" y="429" width="14" height="28" stroke="#e9e9e9"/><g transform="rotate(13.6 1423.9 435.9)">
<rect x="1383.9" y="409.9" width="80" height="52" stroke="#e3e3e3"/>
<rect x="1386.9" y="412.9" width="74" height="46" stroke="#e9e9e9"/>
<path d="M1380.9 409.9 V464.9 H1463.9" stroke="#e9e9e9" stroke-dasharray="3 2"/>
<path d="M1386.9 424.5 H1445.9 M1401.9 412.9 V424.5 M1416.9 412.9 V424.5 M1435.9 412.9 V424.5 M1449.9 412.9 V428 M1403.9 445 H1460.9 M1440.9 445 V458.9 M1450.9 424.5 V440" stroke="#e9e9e9"/>
<path d="M1402 424.5 A14 14 0 0 0 1416 412.9 M1417 424.5 A10 10 0 0 1 1407 434.5 M1401.9 445 A11 11 0 0 0 1390.9 434 M1403.9 445 A11 11 0 0 1 1414.9 434" stroke="#e9e9e9"/>
<rect x="1388.9" y="428" width="8" height="10" stroke="#e9e9e9"/>
<rect x="1420" y="415" width="6" height="6" stroke="#e9e9e9"/><rect x="1437" y="415" width="9" height="6" stroke="#e9e9e9"/>
<rect x="1442" y="451" width="18" height="7" stroke="#e3e3e3"/><path d="M1444 452 V457 M1447 452 V457 M1450 452 V457 M1453 452 V457 M1456 452 V457" stroke="#e9e9e9"/>
<rect x="1386.9" y="412.9" width="10" height="9" stroke="#e9e9e9"/>
</g><path d="M565.4 547 L645.5 547" stroke="#e3e3e3"/><path d="M684.8 547 L846.4 547" stroke="#e3e3e3"/><path d="M684.8 550 L846.4 550" stroke="#e9e9e9"/><path d="M760 544 L840 544" stroke="#e9e9e9"/><path d="M878.7 547 L917.6 547" stroke="#e3e3e3"/><path d="M947.6 548.6 L1377.5 548.6" stroke="#e3e3e3"/><path d="M947.6 551.5 L1377.5 551.5" stroke="#e9e9e9"/><path d="M1406 547.4 L1498 547.4" stroke="#e3e3e3"/><path d="M1498 547.4 L1590 547.4" stroke="#e9e9e9"/><rect x="565.4" y="547" width="79.4" height="44" stroke="#e3e3e3"/><rect x="567" y="548.5" width="76" height="41" stroke="#e9e9e9"/><path d="M567.5 549V568" stroke="#e6e6e6" stroke-width="1.8"/><path d="M571.9 549V568" stroke="#e6e6e6" stroke-width="1.8"/><path d="M576.3 549V568" stroke="#e6e6e6" stroke-width="1.8"/><path d="M580.7 549V568" stroke="#e6e6e6" stroke-width="1.8"/><path d="M585.1 549V568" stroke="#e6e6e6" stroke-width="1.8"/><path d="M589.5 549V568" stroke="#e6e6e6" stroke-width="1.8"/><path d="M593.9 549V568" stroke="#e6e6e6" stroke-width="1.8"/><path d="M598.3 549V568" stroke="#e6e6e6" stroke-width="1.8"/><path d="M602.7 549V568" stroke="#e6e6e6" stroke-width="1.8"/><path d="M607.1 549V568" stroke="#e6e6e6" stroke-width="1.8"/><path d="M611.5 549V568" stroke="#e6e6e6" stroke-width="1.8"/><path d="M615.9 549V568" stroke="#e6e6e6" stroke-width="1.8"/><path d="M620.3 549V568" stroke="#e6e6e6" stroke-width="1.8"/><path d="M567.5 573V590" stroke="#e6e6e6" stroke-width="1.8"/><path d="M571.9 573V590" stroke="#e6e6e6" stroke-width="1.8"/><path d="M576.3 573V590" stroke="#e6e6e6" stroke-width="1.8"/><path d="M580.7 573V590" stroke="#e6e6e6" stroke-width="1.8"/><path d="M585.1 573V590" stroke="#e6e6e6" stroke-width="1.8"/><path d="M589.5 573V590" stroke="#e6e6e6" stroke-width="1.8"/><path d="M593.9 573V590" stroke="#e6e6e6" stroke-width="1.8"/><path d="M598.3 573V590" stroke="#e6e6e6" stroke-width="1.8"/><path d="M602.7 573V590" stroke="#e6e6e6" stroke-width="1.8"/><path d="M607.1 573V590" stroke="#e6e6e6" stroke-width="1.8"/><path d="M611.5 573V590" stroke="#e6e6e6" stroke-width="1.8"/><path d="M615.9 573V590" stroke="#e6e6e6" stroke-width="1.8"/><rect x="565.3" y="568" width="58.7" height="4.6" stroke="#e3e3e3"/><rect x="555.7" y="591" width="89.1" height="161.3" stroke="#e3e3e3"/><rect x="559.6" y="595" width="81" height="153" stroke="#e9e9e9"/><path d="M599.4 595 L599.4 752.3" stroke="#e3e3e3"/><path d="M601.5 595 L601.5 748" stroke="#e9e9e9"/><rect x="563" y="607.2" width="28.2" height="35.8" stroke="#e6e6e6"/><path d="M563 607.2 L591.2 643.0" stroke="#e6e6e6"/><path d="M591.2 607.2 L563 643.0" stroke="#e6e6e6"/><rect x="604.5" y="607.2" width="28.8" height="35.8" stroke="#e6e6e6"/><path d="M604.5 607.2 L633.3 643.0" stroke="#e6e6e6"/><path d="M633.3 607.2 L604.5 643.0" stroke="#e6e6e6"/><rect x="563" y="651" width="28.2" height="37" stroke="#e6e6e6"/><path d="M563 651 L591.2 688" stroke="#e6e6e6"/><path d="M591.2 651 L563 688" stroke="#e6e6e6"/><rect x="604.5" y="651" width="28.8" height="37" stroke="#e6e6e6"/><path d="M604.5 651 L633.3 688" stroke="#e6e6e6"/><path d="M633.3 651 L604.5 688" stroke="#e6e6e6"/><rect x="604.5" y="698" width="28.8" height="36" stroke="#e6e6e6"/><path d="M604.5 698 L633.3 734" stroke="#e6e6e6"/><path d="M633.3 698 L604.5 734" stroke="#e6e6e6"/><rect x="559.6" y="694.5" width="40" height="3" stroke="#e3e3e3"/><path d="M593.5 698 L593.5 748" stroke="#e9e9e9"/><path d="M559.6 647 L599.4 647" stroke="#e9e9e9"/><rect x="636.8" y="615" width="6.9" height="43" stroke="#e9e9e9"/><rect x="636.8" y="680" width="6.9" height="25" stroke="#e9e9e9"/><rect x="636.8" y="726" width="6.9" height="17" stroke="#e9e9e9"/><path d="M684.7 547.3 L846.5 547.3" stroke="#e3e3e3"/><path d="M684.7 550 L832.6 550" stroke="#e9e9e9"/><path d="M760 544.5 L810 544.5" stroke="#e9e9e9"/><path d="M684.7 547.3 L684.7 689" stroke="#e3e3e3"/><path d="M687.5 550 L687.5 689" stroke="#e9e9e9"/><path d="M832.6 550 L832.6 585" stroke="#e3e3e3"/><path d="M835 550 L835 585" stroke="#e9e9e9"/><rect x="689.8" y="550.3" width="80.6" height="9.7" stroke="#e9e9e9"/><rect x="703" y="552" width="5" height="5" stroke="#e9e9e9"/><rect x="717.5" y="552" width="5" height="5" stroke="#e9e9e9"/><rect x="732" y="552" width="5" height="5" stroke="#e9e9e9"/><path d="M806 550 L806 560" stroke="#e3e3e3"/><rect x="785" y="551" width="20" height="5" stroke="#e9e9e9"/><path d="M832.6 547.3 L832.6 561.3" stroke="#e9e9e9"/><path d="M832.6 561.3 A14 14 0 0 0 846.6 547.3" stroke="#e9e9e9"/><rect x="697" y="568.5" width="8.5" height="8.5" stroke="#e9e9e9"/><rect x="726" y="568.5" width="8.5" height="8.5" stroke="#e9e9e9"/><rect x="806" y="568.5" width="8.5" height="8.5" stroke="#e9e9e9"/><path d="M715 572 L715 608" stroke="#e9e9e9"/><path d="M728.5 583 L728.5 608" stroke="#e9e9e9"/><path d="M742.8 583 L742.8 608" stroke="#e9e9e9"/><path d="M718 575 Q730 580 728.5 596 M730 585 L735 592 L740 585" stroke="#e9e9e9"/><path d="M705 608 V601 A3 3.5 0 0 1 711 601 V608" stroke="#e9e9e9"/><path d="M705 613 V619 A3 3.5 0 0 0 711 619 V613" stroke="#e9e9e9"/><path d="M719 608 V601 A3 3.5 0 0 1 725 601 V608" stroke="#e9e9e9"/><path d="M719 613 V619 A3 3.5 0 0 0 725 619 V613" stroke="#e9e9e9"/><path d="M733 608 V601 A3 3.5 0 0 1 739 601 V608" stroke="#e9e9e9"/><path d="M733 613 V619 A3 3.5 0 0 0 739 619 V613" stroke="#e9e9e9"/><path d="M747 608 V601 A3 3.5 0 0 1 753 601 V608" stroke="#e9e9e9"/><path d="M747 613 V619 A3 3.5 0 0 0 753 619 V613" stroke="#e9e9e9"/><path d="M761 608 V601 A3 3.5 0 0 1 767 601 V608" stroke="#e9e9e9"/><path d="M761 613 V619 A3 3.5 0 0 0 767 619 V613" stroke="#e9e9e9"/><rect x="684.7" y="609" width="87" height="4" stroke="#e3e3e3"/><path d="M715 613 L715 640" stroke="#e9e9e9"/><path d="M728.5 613 L728.5 640" stroke="#e9e9e9"/><path d="M742.8 613 L742.8 640" stroke="#e9e9e9"/><path d="M757 613 L757 640" stroke="#e9e9e9"/><path d="M728.5 640 L735 633 L742.8 640 M742.8 640 L750 633 L757 640" stroke="#e9e9e9"/><rect x="697" y="647" width="8.5" height="8.5" stroke="#e9e9e9"/><rect x="726" y="647" width="8.5" height="8.5" stroke="#e9e9e9"/><rect x="771.6" y="584.1" width="61" height="54.2" stroke="#e3e3e3"/><rect x="774" y="586.5" width="56" height="49.5" stroke="#e9e9e9"/><rect x="774" y="626" width="12" height="12" stroke="#e9e9e9"/><path d="M774 626 L786 638" stroke="#e9e9e9"/><path d="M786 626 L774 638" stroke="#e9e9e9"/><path d="M832.6 600 L832.6 614" stroke="#e9e9e9"/><path d="M832.6 614 A14 14 0 0 1 818.6 600" stroke="#e9e9e9"/><path d="M832.6 655 L832.6 641" stroke="#e9e9e9"/><path d="M832.6 641 A14 14 0 0 0 818.6 655" stroke="#e9e9e9"/><path d="M832.6 638.3 L832.6 690" stroke="#e3e3e3"/><path d="M835 638.3 L835 690" stroke="#e9e9e9"/><path d="M684.7 663.2 L846.5 663.2" stroke="#e3e3e3"/><path d="M684.7 666 L846.5 666" stroke="#e9e9e9"/><rect x="696.7" y="664.8" width="31.1" height="16.2" stroke="#e9e9e9"/><path d="M696.7 664.8 L727.8000000000001 681.0" stroke="#e9e9e9"/><path d="M727.8000000000001 664.8 L696.7 681.0" stroke="#e9e9e9"/><rect x="730" y="664.5" width="50.8" height="10.5" stroke="#e9e9e9"/><rect x="736" y="666.5" width="5" height="5" stroke="#e9e9e9"/><rect x="751" y="666.5" width="5" height="5" stroke="#e9e9e9"/><rect x="766" y="666.5" width="5" height="5" stroke="#e9e9e9"/><rect x="815" y="664" width="8" height="8" stroke="#e9e9e9"/><path d="M846.5 670 L846.5 682" stroke="#e9e9e9"/><path d="M846.5 682 A12 12 0 0 1 834.5 670" stroke="#e9e9e9"/><path d="M809.6 663 L809.6 794" stroke="#e3e3e3"/><path d="M812 666 L812 710" stroke="#e9e9e9"/><path d="M684.7 690 L684.7 704" stroke="#e9e9e9"/><path d="M684.7 704 A14 14 0 0 1 670.7 690" stroke="#e9e9e9"/><path d="M684.7 720 L684.7 706" stroke="#e9e9e9"/><path d="M684.7 706 A14 14 0 0 0 670.7 720" stroke="#e9e9e9"/><path d="M684.7 705 L684.7 760" stroke="#e3e3e3"/><path d="M690 722 L700 730 L710 718" stroke="#e9e9e9"/><rect x="724.3" y="687.8" width="78.4" height="55.3" stroke="#e3e3e3"/><path d="M729.5 689.5V710" stroke="#e6e6e6" stroke-width="1.8"/><path d="M733.7 689.5V710" stroke="#e6e6e6" stroke-width="1.8"/><path d="M737.9 689.5V710" stroke="#e6e6e6" stroke-width="1.8"/><path d="M742.1 689.5V710" stroke="#e6e6e6" stroke-width="1.8"/><path d="M746.3 689.5V710" stroke="#e6e6e6" stroke-width="1.8"/><path d="M750.5 689.5V710" stroke="#e6e6e6" stroke-width="1.8"/><path d="M754.7 689.5V710" stroke="#e6e6e6" stroke-width="1.8"/><path d="M758.9 689.5V710" stroke="#e6e6e6" stroke-width="1.8"/><path d="M763.1 689.5V710" stroke="#e6e6e6" stroke-width="1.8"/><path d="M767.3 689.5V710" stroke="#e6e6e6" stroke-width="1.8"/><path d="M771.5 689.5V710" stroke="#e6e6e6" stroke-width="1.8"/><path d="M745.0 720V741.5" stroke="#e6e6e6" stroke-width="1.8"/><path d="M749.2 720V741.5" stroke="#e6e6e6" stroke-width="1.8"/><path d="M753.4 720V741.5" stroke="#e6e6e6" stroke-width="1.8"/><path d="M757.6 720V741.5" stroke="#e6e6e6" stroke-width="1.8"/><path d="M761.8 720V741.5" stroke="#e6e6e6" stroke-width="1.8"/><path d="M766.0 720V741.5" stroke="#e6e6e6" stroke-width="1.8"/><path d="M770.2 720V741.5" stroke="#e6e6e6" stroke-width="1.8"/><path d="M774.4 720V741.5" stroke="#e6e6e6" stroke-width="1.8"/><rect x="723" y="710.9" width="57.8" height="8.1" stroke="#e3e3e3"/><path d="M731 720 L731 741" stroke="#e9e9e9" stroke-dasharray="2 2"/><rect x="878.7" y="547.3" width="39.3" height="138.2" stroke="#e3e3e3"/><rect x="881.5" y="550" width="34" height="133" stroke="#e9e9e9"/><path d="M878.7 618.7 L918 618.7" stroke="#e3e3e3"/><path d="M878.7 651 L918 651" stroke="#e3e3e3"/><rect x="884" y="622" width="7" height="6" stroke="#e9e9e9"/><rect x="884" y="655" width="7" height="6" stroke="#e9e9e9"/><ellipse cx="907" cy="627" rx="3" ry="4.5" stroke="#e9e9e9"/><ellipse cx="907" cy="659" rx="3" ry="4.5" stroke="#e9e9e9"/><path d="M878.7 585 L878.7 601" stroke="#e9e9e9"/><path d="M878.7 601 A16 16 0 0 1 862.7 585" stroke="#e9e9e9"/><path d="M878.7 635 L878.7 649" stroke="#e9e9e9"/><path d="M878.7 649 A14 14 0 0 1 864.7 635" stroke="#e9e9e9"/><path d="M878.7 668 L878.7 682" stroke="#e9e9e9"/><path d="M878.7 682 A14 14 0 0 1 864.7 668" stroke="#e9e9e9"/><rect x="809.6" y="710.9" width="108.4" height="40.3" stroke="#e3e3e3"/><path d="M841.8 710.9 L841.8 751.2" stroke="#e9e9e9"/><path d="M883.3 710.9 L883.3 751.2" stroke="#e9e9e9"/><path d="M842 710.9 L842 694.9" stroke="#e9e9e9"/><path d="M842 694.9 A16 16 0 0 0 826 710.9" stroke="#e9e9e9"/><path d="M883.3 710.9 L883.3 694.9" stroke="#e9e9e9"/><path d="M883.3 694.9 A16 16 0 0 1 899.3 710.9" stroke="#e9e9e9"/><path d="M853 690 L853 677" stroke="#e9e9e9"/><path d="M853 677 A13 13 0 0 1 866 690" stroke="#e9e9e9"/><path d="M853 668 L853 681" stroke="#e9e9e9"/><path d="M853 681 A13 13 0 0 0 866 668" stroke="#e9e9e9"/><path d="M900 742 l6 -6 l8 8 l-6 6z" stroke="#e9e9e9"/><circle cx="912" cy="728" r="3" stroke="#e9e9e9"/><path d="M918 547.3 L918 873.5" stroke="#e3e3e3"/><path d="M920.5 590 L920.5 873.5" stroke="#e9e9e9"/><path d="M846.5 547.3 L846.5 570" stroke="#e3e3e3"/><rect x="474.5" y="766" width="44.5" height="8" stroke="#e9e9e9"/><path d="M479 766 A4 4 0 0 1 487 766" stroke="#e9e9e9"/><path d="M489 766 A4 4 0 0 1 497 766" stroke="#e9e9e9"/><path d="M499 766 A4 4 0 0 1 507 766" stroke="#e9e9e9"/><path d="M509 766 A4 4 0 0 1 517 766" stroke="#e9e9e9"/><rect x="460.8" y="785.8" width="72" height="22.2" stroke="#e3e3e3"/><rect x="463" y="795" width="66" height="5" stroke="#e9e9e9"/><rect x="460.8" y="808" width="36.2" height="41.6" stroke="#e9e9e9"/><rect x="497" y="808" width="35.8" height="41.6" stroke="#e9e9e9"/><path d="M497 808 L497 822" stroke="#e9e9e9"/><path d="M497 822 A14 14 0 0 1 483 808" stroke="#e9e9e9"/><path d="M497 808 L497 822" stroke="#e9e9e9"/><path d="M497 822 A14 14 0 0 0 511 808" stroke="#e9e9e9"/><rect x="557.4" y="774.3" width="65.9" height="72.5" stroke="#e3e3e3"/><path d="M579.8 774.3 L579.8 846.8" stroke="#e3e3e3"/><path d="M557.4 811.2 L623.3 811.2" stroke="#e3e3e3"/><path d="M557.4 780 A14 14 0 0 0 557.4 800" stroke="#e9e9e9"/><path d="M543 790 L557.4 790" stroke="#f0f0f0"/><path d="M557.4 823 A14 14 0 0 0 557.4 843" stroke="#e9e9e9"/><path d="M543 833 L557.4 833" stroke="#f0f0f0"/><path d="M623.3 777 A13 13 0 0 1 623.3 795" stroke="#e9e9e9"/><path d="M623.3 827 A13 13 0 0 1 623.3 845" stroke="#e9e9e9"/><rect x="605" y="799" width="13" height="9.5" stroke="#e9e9e9"/><rect x="605" y="816.5" width="13" height="9.2" stroke="#e9e9e9"/><rect x="580" y="777" width="6" height="8" stroke="#e9e9e9"/><rect x="646.2" y="776.6" width="44.5" height="92.7" stroke="#e9e9e9"/><rect x="650" y="780" width="37" height="86" stroke="#e9e9e9"/><path d="M646.2 776.6 L646.2 790.6" stroke="#e9e9e9"/><path d="M646.2 790.6 A14 14 0 0 0 660.2 776.6" stroke="#e9e9e9"/><path d="M677 822 l4 -4 l4 4 l-4 4z M677 850 l4 -4 l4 4 l-4 4z" stroke="#e9e9e9"/><rect x="449" y="850" width="8" height="8" stroke="#e9e9e9"/><path d="M720.9 744 L720.9 873.5" stroke="#e3e3e3"/><path d="M724.8 750.5 L724.8 873.5" stroke="#e3e3e3"/><path d="M724.8 750.5 L906.7 750.5" stroke="#e3e3e3"/><path d="M724.8 794 L917 794" stroke="#e3e3e3"/><path d="M724.8 796.5 L917 796.5" stroke="#e9e9e9"/><path d="M782.8 750.5 L782.8 873.5" stroke="#e9e9e9" stroke-dasharray="6 2"/><rect x="745.9" y="751.9" width="11.9" height="27.6" stroke="#e9e9e9"/><circle cx="740.6" cy="769" r="3.5" stroke="#e9e9e9"/><path d="M764 767.7 V775.6 H772 V767.7" stroke="#e9e9e9"/><rect x="782.8" y="751.9" width="26.4" height="13.1" stroke="#e9e9e9"/><path d="M782.8 751.9 L809.1999999999999 765.0" stroke="#e9e9e9"/><path d="M809.1999999999999 751.9 L782.8 765.0" stroke="#e9e9e9"/><path d="M809.2 751 L809.2 794" stroke="#e9e9e9"/><path d="M835.6 770 L835.6 794" stroke="#e9e9e9"/><path d="M854 750.5 L854 794" stroke="#e3e3e3"/><path d="M782.8 790 L782.8 776" stroke="#e9e9e9"/><path d="M782.8 776 A14 14 0 0 1 796.8 790" stroke="#e9e9e9"/><path d="M817 790 L817 776" stroke="#e9e9e9"/><path d="M817 776 A14 14 0 0 0 803 790" stroke="#e9e9e9"/><rect x="891" y="771.6" width="13" height="13.2" stroke="#e9e9e9"/><path d="M854 780 L854 768" stroke="#e9e9e9"/><path d="M854 768 A12 12 0 0 1 866 780" stroke="#e9e9e9"/><path d="M906.7 750.5 L906.7 794" stroke="#e3e3e3"/><path d="M737 807 l5 -5 l5 5 l-5 5z" stroke="#e9e9e9"/><rect x="736.7" y="815" width="26.3" height="5.4" stroke="#e9e9e9"/><rect x="738" y="817" width="8" height="8" stroke="#e9e9e9"/><rect x="748" y="817" width="8" height="8" stroke="#e9e9e9"/><rect x="756" y="817" width="7" height="8" stroke="#e9e9e9"/><rect x="732.7" y="836.2" width="35.6" height="19.8" stroke="#e9e9e9"/><rect x="735" y="838.5" width="31" height="15" stroke="#eeeeee"/><rect x="738" y="862.6" width="8.8" height="6.6" stroke="#e9e9e9"/><rect x="746.8" y="862.6" width="8.8" height="6.6" stroke="#e9e9e9"/><rect x="755.6" y="862.6" width="8.8" height="6.6" stroke="#e9e9e9"/><rect x="817" y="808.5" width="26.5" height="13.2" stroke="#e9e9e9"/><circle cx="823.7" cy="804.6" r="2.8" stroke="#e9e9e9"/><circle cx="823.7" cy="825.7" r="2.8" stroke="#e9e9e9"/><circle cx="835.5" cy="804.6" r="2.8" stroke="#e9e9e9"/><circle cx="835.5" cy="825.7" r="2.8" stroke="#e9e9e9"/><path d="M917 802 A9 9 0 0 0 917 816" stroke="#e9e9e9"/><path d="M917 827 A9 9 0 0 0 917 841" stroke="#e9e9e9"/><rect x="872.5" y="848" width="8" height="21" stroke="#e9e9e9"/><rect x="880.5" y="848" width="8" height="10" stroke="#e9e9e9"/><rect x="904" y="848" width="10.6" height="21" stroke="#e9e9e9"/><path d="M904 858.5 L914.6 858.5" stroke="#e9e9e9"/><rect x="898" y="860" width="5" height="8" stroke="#e9e9e9"/><path d="M947.6 548.6 L947.6 869.5" stroke="#e3e3e3"/><path d="M951 551.5 L951 869.5" stroke="#e9e9e9"/><path d="M1163.5 551.5 L1163.5 869.5" stroke="#e3e3e3"/><path d="M1166.5 551.5 L1166.5 869.5" stroke="#e3e3e3"/><path d="M1372 551.5 L1372 869.5" stroke="#e3e3e3"/><path d="M1376 548.6 L1376 869.5" stroke="#e9e9e9"/><path d="M951 562 A11 11 0 0 1 951 584" stroke="#e9e9e9"/><path d="M951 640 A11 11 0 0 1 951 662" stroke="#e9e9e9"/><path d="M951 700 A11 11 0 0 1 951 722" stroke="#e9e9e9"/><path d="M951 820 A11 11 0 0 1 951 842" stroke="#e9e9e9"/><path d="M1372 560 A11 11 0 0 0 1372 582" stroke="#e9e9e9"/><path d="M1372 645 A11 11 0 0 0 1372 667" stroke="#e9e9e9"/><path d="M1372 700 A11 11 0 0 0 1372 722" stroke="#e9e9e9"/><path d="M1372 840 A11 11 0 0 0 1372 862" stroke="#e9e9e9"/><rect x="983.6" y="578" width="11" height="67.6" stroke="#e9e9e9"/><path d="M983.6 600.5 L994.6 600.5" stroke="#e9e9e9"/><path d="M983.6 623 L994.6 623" stroke="#e9e9e9"/><rect x="976.4" y="580.5" width="7.2" height="7.5" stroke="#e9e9e9"/><rect x="976.4" y="591.5" width="7.2" height="7.5" stroke="#e9e9e9"/><rect x="976.4" y="602.5" width="7.2" height="7.5" stroke="#e9e9e9"/><rect x="976.4" y="613.5" width="7.2" height="7.5" stroke="#e9e9e9"/><rect x="976.4" y="624.5" width="7.2" height="7.5" stroke="#e9e9e9"/><rect x="976.4" y="635.5" width="7.2" height="7.5" stroke="#e9e9e9"/><rect x="1010.5" y="578" width="11" height="67.6" stroke="#e9e9e9"/><path d="M1010.5 600.5 L1021.5 600.5" stroke="#e9e9e9"/><path d="M1010.5 623 L1021.5 623" stroke="#e9e9e9"/><rect x="1003.3" y="580.5" width="7.2" height="7.5" stroke="#e9e9e9"/><rect x="1003.3" y="591.5" width="7.2" height="7.5" stroke="#e9e9e9"/><rect x="1003.3" y="602.5" width="7.2" height="7.5" stroke="#e9e9e9"/><rect x="1003.3" y="613.5" width="7.2" height="7.5" stroke="#e9e9e9"/><rect x="1003.3" y="624.5" width="7.2" height="7.5" stroke="#e9e9e9"/><rect x="1003.3" y="635.5" width="7.2" height="7.5" stroke="#e9e9e9"/><rect x="1037.5" y="578" width="11" height="67.6" stroke="#e9e9e9"/><path d="M1037.5 600.5 L1048.5 600.5" stroke="#e9e9e9"/><path d="M1037.5 623 L1048.5 623" stroke="#e9e9e9"/><rect x="1030.3" y="580.5" width="7.2" height="7.5" stroke="#e9e9e9"/><rect x="1030.3" y="591.5" width="7.2" height="7.5" stroke="#e9e9e9"/><rect x="1030.3" y="602.5" width="7.2" height="7.5" stroke="#e9e9e9"/><rect x="1030.3" y="613.5" width="7.2" height="7.5" stroke="#e9e9e9"/><rect x="1030.3" y="624.5" width="7.2" height="7.5" stroke="#e9e9e9"/><rect x="1030.3" y="635.5" width="7.2" height="7.5" stroke="#e9e9e9"/><rect x="1065.0" y="578" width="11" height="67.6" stroke="#e9e9e9"/><path d="M1065.0 600.5 L1076.0 600.5" stroke="#e9e9e9"/><path d="M1065.0 623 L1076.0 623" stroke="#e9e9e9"/><rect x="1057.8" y="580.5" width="7.2" height="7.5" stroke="#e9e9e9"/><rect x="1057.8" y="591.5" width="7.2" height="7.5" stroke="#e9e9e9"/><rect x="1057.8" y="602.5" width="7.2" height="7.5" stroke="#e9e9e9"/><rect x="1057.8" y="613.5" width="7.2" height="7.5" stroke="#e9e9e9"/><rect x="1057.8" y="624.5" width="7.2" height="7.5" stroke="#e9e9e9"/><rect x="1057.8" y="635.5" width="7.2" height="7.5" stroke="#e9e9e9"/><rect x="1091.7" y="578" width="11" height="67.6" stroke="#e9e9e9"/><path d="M1091.7 600.5 L1102.7 600.5" stroke="#e9e9e9"/><path d="M1091.7 623 L1102.7 623" stroke="#e9e9e9"/><rect x="1084.5" y="580.5" width="7.2" height="7.5" stroke="#e9e9e9"/><rect x="1084.5" y="591.5" width="7.2" height="7.5" stroke="#e9e9e9"/><rect x="1084.5" y="602.5" width="7.2" height="7.5" stroke="#e9e9e9"/><rect x="1084.5" y="613.5" width="7.2" height="7.5" stroke="#e9e9e9"/><rect x="1084.5" y="624.5" width="7.2" height="7.5" stroke="#e9e9e9"/><rect x="1084.5" y="635.5" width="7.2" height="7.5" stroke="#e9e9e9"/><rect x="1118.7" y="578" width="11" height="67.6" stroke="#e9e9e9"/><path d="M1118.7 600.5 L1129.7 600.5" stroke="#e9e9e9"/><path d="M1118.7 623 L1129.7 623" stroke="#e9e9e9"/><rect x="1111.5" y="580.5" width="7.2" height="7.5" stroke="#e9e9e9"/><rect x="1111.5" y="591.5" width="7.2" height="7.5" stroke="#e9e9e9"/><rect x="1111.5" y="602.5" width="7.2" height="7.5" stroke="#e9e9e9"/><rect x="1111.5" y="613.5" width="7.2" height="7.5" stroke="#e9e9e9"/><rect x="1111.5" y="624.5" width="7.2" height="7.5" stroke="#e9e9e9"/><rect x="1111.5" y="635.5" width="7.2" height="7.5" stroke="#e9e9e9"/><rect x="947.4" y="580" width="12.8" height="62" stroke="#e9e9e9"/><rect x="950" y="583" width="7" height="56" stroke="#ececec"/><rect x="1363" y="580" width="10" height="62" stroke="#e9e9e9"/><rect x="1363" y="724" width="10" height="120" stroke="#e9e9e9"/><rect x="951" y="669.6" width="44" height="27.3" stroke="#e9e9e9"/><rect x="968" y="672" width="20" height="22" stroke="#e2e2e2"/><path d="M970 673 L970 693" stroke="#ececec"/><path d="M972.5 673 L972.5 693" stroke="#ececec"/><path d="M975.0 673 L975.0 693" stroke="#ececec"/><path d="M977.5 673 L977.5 693" stroke="#ececec"/><path d="M980.0 673 L980.0 693" stroke="#ececec"/><path d="M982.5 673 L982.5 693" stroke="#ececec"/><path d="M985.0 673 L985.0 693" stroke="#ececec"/><rect x="981.1" y="719.2" width="33.7" height="23" stroke="#e9e9e9"/><path d="M991.8000000000001 719.2 L991.8000000000001 742.2" stroke="#e9e9e9"/><path d="M991.8000000000001 730.7 L1014.8000000000001 730.7" stroke="#e9e9e9"/><rect x="973.1" y="720.2" width="8" height="8" stroke="#e9e9e9"/><rect x="973.1" y="731.2" width="8" height="8" stroke="#e9e9e9"/><rect x="993.6" y="712.2" width="8.5" height="7" stroke="#e9e9e9"/><rect x="1004.6" y="712.2" width="8.5" height="7" stroke="#e9e9e9"/><rect x="993.6" y="742.2" width="8.5" height="7" stroke="#e9e9e9"/><rect x="1004.6" y="742.2" width="8.5" height="7" stroke="#e9e9e9"/><rect x="981.1" y="773.4" width="33.7" height="23" stroke="#e9e9e9"/><path d="M991.8000000000001 773.4 L991.8000000000001 796.4" stroke="#e9e9e9"/><path d="M991.8000000000001 784.9 L1014.8000000000001 784.9" stroke="#e9e9e9"/><rect x="973.1" y="774.4" width="8" height="8" stroke="#e9e9e9"/><rect x="973.1" y="785.4" width="8" height="8" stroke="#e9e9e9"/><rect x="993.6" y="766.4" width="8.5" height="7" stroke="#e9e9e9"/><rect x="1004.6" y="766.4" width="8.5" height="7" stroke="#e9e9e9"/><rect x="993.6" y="796.4" width="8.5" height="7" stroke="#e9e9e9"/><rect x="1004.6" y="796.4" width="8.5" height="7" stroke="#e9e9e9"/><rect x="981.1" y="825.4" width="33.7" height="23" stroke="#e9e9e9"/><path d="M991.8000000000001 825.4 L991.8000000000001 848.4" stroke="#e9e9e9"/><path d="M991.8000000000001 836.9 L1014.8000000000001 836.9" stroke="#e9e9e9"/><rect x="973.1" y="826.4" width="8" height="8" stroke="#e9e9e9"/><rect x="973.1" y="837.4" width="8" height="8" stroke="#e9e9e9"/><rect x="993.6" y="818.4" width="8.5" height="7" stroke="#e9e9e9"/><rect x="1004.6" y="818.4" width="8.5" height="7" stroke="#e9e9e9"/><rect x="993.6" y="848.4" width="8.5" height="7" stroke="#e9e9e9"/><rect x="1004.6" y="848.4" width="8.5" height="7" stroke="#e9e9e9"/><rect x="1037.2" y="719.2" width="33.7" height="23" stroke="#e9e9e9"/><path d="M1047.9 719.2 L1047.9 742.2" stroke="#e9e9e9"/><path d="M1047.9 730.7 L1070.9 730.7" stroke="#e9e9e9"/><rect x="1029.2" y="720.2" width="8" height="8" stroke="#e9e9e9"/><rect x="1029.2" y="731.2" width="8" height="8" stroke="#e9e9e9"/><rect x="1049.7" y="712.2" width="8.5" height="7" stroke="#e9e9e9"/><rect x="1060.7" y="712.2" width="8.5" height="7" stroke="#e9e9e9"/><rect x="1049.7" y="742.2" width="8.5" height="7" stroke="#e9e9e9"/><rect x="1060.7" y="742.2" width="8.5" height="7" stroke="#e9e9e9"/><rect x="1037.2" y="773.4" width="33.7" height="23" stroke="#e9e9e9"/><path d="M1047.9 773.4 L1047.9 796.4" stroke="#e9e9e9"/><path d="M1047.9 784.9 L1070.9 784.9" stroke="#e9e9e9"/><rect x="1029.2" y="774.4" width="8" height="8" stroke="#e9e9e9"/><rect x="1029.2" y="785.4" width="8" height="8" stroke="#e9e9e9"/><rect x="1049.7" y="766.4" width="8.5" height="7" stroke="#e9e9e9"/><rect x="1060.7" y="766.4" width="8.5" height="7" stroke="#e9e9e9"/><rect x="1049.7" y="796.4" width="8.5" height="7" stroke="#e9e9e9"/><rect x="1060.7" y="796.4" width="8.5" height="7" stroke="#e9e9e9"/><rect x="1037.2" y="825.4" width="33.7" height="23" stroke="#e9e9e9"/><path d="M1047.9 825.4 L1047.9 848.4" stroke="#e9e9e9"/><path d="M1047.9 836.9 L1070.9 836.9" stroke="#e9e9e9"/><rect x="1029.2" y="826.4" width="8" height="8" stroke="#e9e9e9"/><rect x="1029.2" y="837.4" width="8" height="8" stroke="#e9e9e9"/><rect x="1049.7" y="818.4" width="8.5" height="7" stroke="#e9e9e9"/><rect x="1060.7" y="818.4" width="8.5" height="7" stroke="#e9e9e9"/><rect x="1049.7" y="848.4" width="8.5" height="7" stroke="#e9e9e9"/><rect x="1060.7" y="848.4" width="8.5" height="7" stroke="#e9e9e9"/><rect x="1099.3" y="719.2" width="33.7" height="23" stroke="#e9e9e9"/><path d="M1110.0 719.2 L1110.0 742.2" stroke="#e9e9e9"/><path d="M1110.0 730.7 L1133.0 730.7" stroke="#e9e9e9"/><rect x="1091.3" y="720.2" width="8" height="8" stroke="#e9e9e9"/><rect x="1091.3" y="731.2" width="8" height="8" stroke="#e9e9e9"/><rect x="1111.8" y="712.2" width="8.5" height="7" stroke="#e9e9e9"/><rect x="1122.8" y="712.2" width="8.5" height="7" stroke="#e9e9e9"/><rect x="1111.8" y="742.2" width="8.5" height="7" stroke="#e9e9e9"/><rect x="1122.8" y="742.2" width="8.5" height="7" stroke="#e9e9e9"/><rect x="1099.3" y="773.4" width="33.7" height="23" stroke="#e9e9e9"/><path d="M1110.0 773.4 L1110.0 796.4" stroke="#e9e9e9"/><path d="M1110.0 784.9 L1133.0 784.9" stroke="#e9e9e9"/><rect x="1091.3" y="774.4" width="8" height="8" stroke="#e9e9e9"/><rect x="1091.3" y="785.4" width="8" height="8" stroke="#e9e9e9"/><rect x="1111.8" y="766.4" width="8.5" height="7" stroke="#e9e9e9"/><rect x="1122.8" y="766.4" width="8.5" height="7" stroke="#e9e9e9"/><rect x="1111.8" y="796.4" width="8.5" height="7" stroke="#e9e9e9"/><rect x="1122.8" y="796.4" width="8.5" height="7" stroke="#e9e9e9"/><rect x="1099.3" y="825.4" width="33.7" height="23" stroke="#e9e9e9"/><path d="M1110.0 825.4 L1110.0 848.4" stroke="#e9e9e9"/><path d="M1110.0 836.9 L1133.0 836.9" stroke="#e9e9e9"/><rect x="1091.3" y="826.4" width="8" height="8" stroke="#e9e9e9"/><rect x="1091.3" y="837.4" width="8" height="8" stroke="#e9e9e9"/><rect x="1111.8" y="818.4" width="8.5" height="7" stroke="#e9e9e9"/><rect x="1122.8" y="818.4" width="8.5" height="7" stroke="#e9e9e9"/><rect x="1111.8" y="848.4" width="8.5" height="7" stroke="#e9e9e9"/><rect x="1122.8" y="848.4" width="8.5" height="7" stroke="#e9e9e9"/><rect x="947.4" y="724" width="12.8" height="120.3" stroke="#e9e9e9"/><rect x="950" y="727" width="7" height="114" stroke="#ececec"/><rect x="1194.2" y="575.7" width="34" height="22.5" stroke="#e9e9e9"/><path d="M1217.5 575.7 L1217.5 598.2" stroke="#e9e9e9"/><path d="M1194.2 586.7 L1217.5 586.7" stroke="#e9e9e9"/><rect x="1196.2" y="568.7" width="8.6" height="7" stroke="#e9e9e9"/><rect x="1207.5" y="568.7" width="8.6" height="7" stroke="#e9e9e9"/><rect x="1196.2" y="598.2" width="8.6" height="7" stroke="#e9e9e9"/><rect x="1207.5" y="598.2" width="8.6" height="7" stroke="#e9e9e9"/><rect x="1228.2" y="577.2" width="8" height="8" stroke="#e9e9e9"/><rect x="1228.2" y="588.2" width="8" height="8" stroke="#e9e9e9"/><rect x="1194.2" y="628.8" width="34" height="22.5" stroke="#e9e9e9"/><path d="M1217.5 628.8 L1217.5 651.3" stroke="#e9e9e9"/><path d="M1194.2 639.8 L1217.5 639.8" stroke="#e9e9e9"/><rect x="1196.2" y="621.8" width="8.6" height="7" stroke="#e9e9e9"/><rect x="1207.5" y="621.8" width="8.6" height="7" stroke="#e9e9e9"/><rect x="1196.2" y="651.3" width="8.6" height="7" stroke="#e9e9e9"/><rect x="1207.5" y="651.3" width="8.6" height="7" stroke="#e9e9e9"/><rect x="1228.2" y="630.3" width="8" height="8" stroke="#e9e9e9"/><rect x="1228.2" y="641.3" width="8" height="8" stroke="#e9e9e9"/><rect x="1252.4" y="575.7" width="34" height="22.5" stroke="#e9e9e9"/><path d="M1275.7 575.7 L1275.7 598.2" stroke="#e9e9e9"/><path d="M1252.4 586.7 L1275.7 586.7" stroke="#e9e9e9"/><rect x="1254.4" y="568.7" width="8.6" height="7" stroke="#e9e9e9"/><rect x="1265.7" y="568.7" width="8.6" height="7" stroke="#e9e9e9"/><rect x="1254.4" y="598.2" width="8.6" height="7" stroke="#e9e9e9"/><rect x="1265.7" y="598.2" width="8.6" height="7" stroke="#e9e9e9"/><rect x="1286.4" y="577.2" width="8" height="8" stroke="#e9e9e9"/><rect x="1286.4" y="588.2" width="8" height="8" stroke="#e9e9e9"/><rect x="1252.4" y="628.8" width="34" height="22.5" stroke="#e9e9e9"/><path d="M1275.7 628.8 L1275.7 651.3" stroke="#e9e9e9"/><path d="M1252.4 639.8 L1275.7 639.8" stroke="#e9e9e9"/><rect x="1254.4" y="621.8" width="8.6" height="7" stroke="#e9e9e9"/><rect x="1265.7" y="621.8" width="8.6" height="7" stroke="#e9e9e9"/><rect x="1254.4" y="651.3" width="8.6" height="7" stroke="#e9e9e9"/><rect x="1265.7" y="651.3" width="8.6" height="7" stroke="#e9e9e9"/><rect x="1286.4" y="630.3" width="8" height="8" stroke="#e9e9e9"/><rect x="1286.4" y="641.3" width="8" height="8" stroke="#e9e9e9"/><rect x="1310.6" y="575.7" width="34" height="22.5" stroke="#e9e9e9"/><path d="M1333.8999999999999 575.7 L1333.8999999999999 598.2" stroke="#e9e9e9"/><path d="M1310.6 586.7 L1333.8999999999999 586.7" stroke="#e9e9e9"/><rect x="1312.6" y="568.7" width="8.6" height="7" stroke="#e9e9e9"/><rect x="1323.8999999999999" y="568.7" width="8.6" height="7" stroke="#e9e9e9"/><rect x="1312.6" y="598.2" width="8.6" height="7" stroke="#e9e9e9"/><rect x="1323.8999999999999" y="598.2" width="8.6" height="7" stroke="#e9e9e9"/><rect x="1344.6" y="577.2" width="8" height="8" stroke="#e9e9e9"/><rect x="1344.6" y="588.2" width="8" height="8" stroke="#e9e9e9"/><rect x="1310.6" y="628.8" width="34" height="22.5" stroke="#e9e9e9"/><path d="M1333.8999999999999 628.8 L1333.8999999999999 651.3" stroke="#e9e9e9"/><path d="M1310.6 639.8 L1333.8999999999999 639.8" stroke="#e9e9e9"/><rect x="1312.6" y="621.8" width="8.6" height="7" stroke="#e9e9e9"/><rect x="1323.8999999999999" y="621.8" width="8.6" height="7" stroke="#e9e9e9"/><rect x="1312.6" y="651.3" width="8.6" height="7" stroke="#e9e9e9"/><rect x="1323.8999999999999" y="651.3" width="8.6" height="7" stroke="#e9e9e9"/><rect x="1344.6" y="630.3" width="8" height="8" stroke="#e9e9e9"/><rect x="1344.6" y="641.3" width="8" height="8" stroke="#e9e9e9"/><rect x="1329" y="674" width="46" height="26" stroke="#e9e9e9"/><rect x="1341" y="677" width="20" height="20" stroke="#e2e2e2"/><path d="M1343 678 L1343 696" stroke="#ececec"/><path d="M1345.5 678 L1345.5 696" stroke="#ececec"/><path d="M1348.0 678 L1348.0 696" stroke="#ececec"/><path d="M1350.5 678 L1350.5 696" stroke="#ececec"/><path d="M1353.0 678 L1353.0 696" stroke="#ececec"/><path d="M1355.5 678 L1355.5 696" stroke="#ececec"/><path d="M1358.0 678 L1358.0 696" stroke="#ececec"/><rect x="1205.8" y="721" width="13" height="44" stroke="#e9e9e9"/><path d="M1205.8 743.0 L1218.8 743.0" stroke="#e9e9e9"/><rect x="1218.8" y="723" width="6" height="7" stroke="#e9e9e9"/><rect x="1218.8" y="734" width="6" height="7" stroke="#e9e9e9"/><rect x="1218.8" y="745" width="6" height="7" stroke="#e9e9e9"/><rect x="1218.8" y="756" width="6" height="7" stroke="#e9e9e9"/><rect x="1205.8" y="781.6" width="13" height="66" stroke="#e9e9e9"/><path d="M1205.8 814.6 L1218.8 814.6" stroke="#e9e9e9"/><rect x="1218.8" y="783.6" width="6" height="7" stroke="#e9e9e9"/><rect x="1218.8" y="794.6" width="6" height="7" stroke="#e9e9e9"/><rect x="1218.8" y="805.6" width="6" height="7" stroke="#e9e9e9"/><rect x="1218.8" y="816.6" width="6" height="7" stroke="#e9e9e9"/><rect x="1218.8" y="827.6" width="6" height="7" stroke="#e9e9e9"/><rect x="1218.8" y="838.6" width="6" height="7" stroke="#e9e9e9"/><rect x="1232" y="721" width="13" height="44" stroke="#e9e9e9"/><path d="M1232 743.0 L1245 743.0" stroke="#e9e9e9"/><rect x="1245" y="723" width="6" height="7" stroke="#e9e9e9"/><rect x="1245" y="734" width="6" height="7" stroke="#e9e9e9"/><rect x="1245" y="745" width="6" height="7" stroke="#e9e9e9"/><rect x="1245" y="756" width="6" height="7" stroke="#e9e9e9"/><rect x="1232" y="781.6" width="13" height="66" stroke="#e9e9e9"/><path d="M1232 814.6 L1245 814.6" stroke="#e9e9e9"/><rect x="1245" y="783.6" width="6" height="7" stroke="#e9e9e9"/><rect x="1245" y="794.6" width="6" height="7" stroke="#e9e9e9"/><rect x="1245" y="805.6" width="6" height="7" stroke="#e9e9e9"/><rect x="1245" y="816.6" width="6" height="7" stroke="#e9e9e9"/><rect x="1245" y="827.6" width="6" height="7" stroke="#e9e9e9"/><rect x="1245" y="838.6" width="6" height="7" stroke="#e9e9e9"/><rect x="1259" y="721" width="13" height="44" stroke="#e9e9e9"/><path d="M1259 743.0 L1272 743.0" stroke="#e9e9e9"/><rect x="1272" y="723" width="6" height="7" stroke="#e9e9e9"/><rect x="1272" y="734" width="6" height="7" stroke="#e9e9e9"/><rect x="1272" y="745" width="6" height="7" stroke="#e9e9e9"/><rect x="1272" y="756" width="6" height="7" stroke="#e9e9e9"/><rect x="1259" y="781.6" width="13" height="66" stroke="#e9e9e9"/><path d="M1259 814.6 L1272 814.6" stroke="#e9e9e9"/><rect x="1272" y="783.6" width="6" height="7" stroke="#e9e9e9"/><rect x="1272" y="794.6" width="6" height="7" stroke="#e9e9e9"/><rect x="1272" y="805.6" width="6" height="7" stroke="#e9e9e9"/><rect x="1272" y="816.6" width="6" height="7" stroke="#e9e9e9"/><rect x="1272" y="827.6" width="6" height="7" stroke="#e9e9e9"/><rect x="1272" y="838.6" width="6" height="7" stroke="#e9e9e9"/><rect x="1285" y="721" width="13" height="44" stroke="#e9e9e9"/><path d="M1285 743.0 L1298 743.0" stroke="#e9e9e9"/><rect x="1298" y="723" width="6" height="7" stroke="#e9e9e9"/><rect x="1298" y="734" width="6" height="7" stroke="#e9e9e9"/><rect x="1298" y="745" width="6" height="7" stroke="#e9e9e9"/><rect x="1298" y="756" width="6" height="7" stroke="#e9e9e9"/><rect x="1285" y="781.6" width="13" height="66" stroke="#e9e9e9"/><path d="M1285 814.6 L1298 814.6" stroke="#e9e9e9"/><rect x="1298" y="783.6" width="6" height="7" stroke="#e9e9e9"/><rect x="1298" y="794.6" width="6" height="7" stroke="#e9e9e9"/><rect x="1298" y="805.6" width="6" height="7" stroke="#e9e9e9"/><rect x="1298" y="816.6" width="6" height="7" stroke="#e9e9e9"/><rect x="1298" y="827.6" width="6" height="7" stroke="#e9e9e9"/><rect x="1298" y="838.6" width="6" height="7" stroke="#e9e9e9"/><rect x="1314" y="721" width="13" height="44" stroke="#e9e9e9"/><path d="M1314 743.0 L1327 743.0" stroke="#e9e9e9"/><rect x="1327" y="723" width="6" height="7" stroke="#e9e9e9"/><rect x="1327" y="734" width="6" height="7" stroke="#e9e9e9"/><rect x="1327" y="745" width="6" height="7" stroke="#e9e9e9"/><rect x="1327" y="756" width="6" height="7" stroke="#e9e9e9"/><rect x="1314" y="781.6" width="13" height="66" stroke="#e9e9e9"/><path d="M1314 814.6 L1327 814.6" stroke="#e9e9e9"/><rect x="1327" y="783.6" width="6" height="7" stroke="#e9e9e9"/><rect x="1327" y="794.6" width="6" height="7" stroke="#e9e9e9"/><rect x="1327" y="805.6" width="6" height="7" stroke="#e9e9e9"/><rect x="1327" y="816.6" width="6" height="7" stroke="#e9e9e9"/><rect x="1327" y="827.6" width="6" height="7" stroke="#e9e9e9"/><rect x="1327" y="838.6" width="6" height="7" stroke="#e9e9e9"/><rect x="1406" y="547.4" width="92" height="92.6" stroke="#e3e3e3"/><path d="M1406 637.8 L1498 637.8" stroke="#e3e3e3"/><path d="M1433 589.5 L1497.7 589.5" stroke="#e9e9e9"/><path d="M1460 560 L1460 637" stroke="#e9e9e9"/><ellipse cx="1465" cy="576" rx="3" ry="4" stroke="#e9e9e9"/><ellipse cx="1465" cy="605" rx="3" ry="4" stroke="#e9e9e9"/><ellipse cx="1475" cy="576" rx="3" ry="4" stroke="#e9e9e9"/><ellipse cx="1475" cy="605" rx="3" ry="4" stroke="#e9e9e9"/><path d="M1420 560 L1420 574" stroke="#e9e9e9"/><path d="M1420 574 A14 14 0 0 0 1434 560" stroke="#e9e9e9"/><path d="M1420 637 L1420 623" stroke="#e9e9e9"/><path d="M1420 623 A14 14 0 0 1 1434 637" stroke="#e9e9e9"/><path d="M1497.7 560 L1497.7 572" stroke="#e9e9e9"/><path d="M1497.7 572 A12 12 0 0 1 1485.7 560" stroke="#e9e9e9"/><path d="M1497.7 620 L1497.7 634" stroke="#e9e9e9"/><path d="M1497.7 634 A14 14 0 0 1 1483.7 620" stroke="#e9e9e9"/><path d="M1544.3 547.4 L1544.3 618" stroke="#e3e3e3"/><path d="M1547 547.4 L1547 618" stroke="#e9e9e9"/><path d="M1546 618 L1546 632" stroke="#e9e9e9"/><path d="M1546 632 A14 14 0 0 0 1560 618" stroke="#e9e9e9"/><path d="M1589.4 494.8 L1589.4 592.5" stroke="#e3e3e3"/><path d="M1592 497.7 L1592 592.5" stroke="#e9e9e9"/><path d="M1762.2 494.8 L1762.2 594" stroke="#e3e3e3"/><path d="M1765 497.7 L1765 594" stroke="#e9e9e9"/><path d="M1590 515.8 L1762 515.8" stroke="#e9e9e9"/><path d="M1590 591 L1762 591" stroke="#e3e3e3"/><path d="M1662 597 L1905 597" stroke="#e9e9e9"/><rect x="1607.4" y="498" width="33" height="17.5" stroke="#e5e5e5"/><path d="M1607.4 498 L1640.4 515.5" stroke="#e5e5e5"/><path d="M1640.4 498 L1607.4 515.5" stroke="#e5e5e5"/><rect x="1640.4" y="498" width="33" height="17.5" stroke="#e5e5e5"/><path d="M1640.4 498 L1673.4 515.5" stroke="#e5e5e5"/><path d="M1673.4 498 L1640.4 515.5" stroke="#e5e5e5"/><path d="M1703.6 517 L1703.6 591" stroke="#e9e9e9"/><path d="M1647 517 L1647 591" stroke="#ececec"/><path d="M1705 571 L1705 556" stroke="#e9e9e9"/><path d="M1705 556 A15 15 0 0 1 1720 571" stroke="#e9e9e9"/><path d="M1765 571 L1765 557" stroke="#e9e9e9"/><path d="M1765 557 A14 14 0 0 1 1779 571" stroke="#e9e9e9"/><rect x="1766.7" y="568" width="58.6" height="29" stroke="#e9e9e9"/><path d="M1787.7 577.5 L1787.7 595.5" stroke="#e2e2e2"/><path d="M1791.2 577.5 L1791.2 595.5" stroke="#e2e2e2"/><path d="M1794.7 577.5 L1794.7 595.5" stroke="#e2e2e2"/><path d="M1798.2 577.5 L1798.2 595.5" stroke="#e2e2e2"/><path d="M1801.7 577.5 L1801.7 595.5" stroke="#e2e2e2"/><path d="M1805.2 577.5 L1805.2 595.5" stroke="#e2e2e2"/><path d="M1808.7 577.5 L1808.7 595.5" stroke="#e2e2e2"/><path d="M1554 547.5 L1554 562" stroke="#e9e9e9"/><path d="M1581 547.5 L1581 562" stroke="#e9e9e9"/><path d="M1554 562 A13.5 13.5 0 0 0 1567.5 547.5" stroke="#e9e9e9"/><path d="M1581 562 A13.5 13.5 0 0 1 1567.5 547.5" stroke="#e9e9e9"/><path d="M1596 591 L1596 605" stroke="#e9e9e9"/><path d="M1622 591 L1622 605" stroke="#e9e9e9"/><path d="M1596 605 A13 13 0 0 0 1609 591" stroke="#e9e9e9"/><path d="M1622 605 A13 13 0 0 1 1609 591" stroke="#e9e9e9"/><rect x="1405.6" y="636.9" width="128.4" height="113.8" stroke="#e3e3e3"/><rect x="1445.7" y="640" width="49.7" height="32" stroke="#e3e3e3"/><path d="M1445.7 640 L1495.4 672" stroke="#e3e3e3"/><path d="M1495.4 640 L1445.7 672" stroke="#e3e3e3"/><rect x="1439.3" y="686.6" width="83.4" height="57.7" stroke="#e3e3e3"/><path d="M1457 690 L1457 710" stroke="#e3e3e3"/><path d="M1460.3 690 L1460.3 710" stroke="#e3e3e3"/><path d="M1463.6 690 L1463.6 710" stroke="#e3e3e3"/><path d="M1466.9 690 L1466.9 710" stroke="#e3e3e3"/><path d="M1470.2 690 L1470.2 710" stroke="#e3e3e3"/><path d="M1473.5 690 L1473.5 710" stroke="#e3e3e3"/><path d="M1476.8 690 L1476.8 710" stroke="#e3e3e3"/><path d="M1480.1 690 L1480.1 710" stroke="#e3e3e3"/><path d="M1483.4 690 L1483.4 710" stroke="#e3e3e3"/><path d="M1486.7 690 L1486.7 710" stroke="#e3e3e3"/><path d="M1490.0 690 L1490.0 710" stroke="#e3e3e3"/><path d="M1466.6 720 L1466.6 742" stroke="#e3e3e3"/><path d="M1469.9 720 L1469.9 742" stroke="#e3e3e3"/><path d="M1473.2 720 L1473.2 742" stroke="#e3e3e3"/><path d="M1476.5 720 L1476.5 742" stroke="#e3e3e3"/><path d="M1479.8 720 L1479.8 742" stroke="#e3e3e3"/><path d="M1483.1 720 L1483.1 742" stroke="#e3e3e3"/><path d="M1486.4 720 L1486.4 742" stroke="#e3e3e3"/><path d="M1489.7 720 L1489.7 742" stroke="#e3e3e3"/><rect x="1439" y="710.6" width="60" height="8.7" stroke="#e3e3e3"/><rect x="1535.5" y="696" width="12" height="14.6" stroke="#e9e9e9"/><path d="M1535.5 696 L1547.5 710.6" stroke="#e9e9e9"/><path d="M1547.5 696 L1535.5 710.6" stroke="#e9e9e9"/><rect x="1522.7" y="676" width="30" height="39" stroke="#e9e9e9"/><path d="M1410.5 778 L1410.5 872" stroke="#e3e3e3"/><path d="M1413.5 790 L1413.5 872" stroke="#e9e9e9"/><path d="M1410.5 787.6 L1442.5 787.6" stroke="#e3e3e3"/><path d="M1442.5 750 L1442.5 787.6" stroke="#e3e3e3"/><rect x="1447.3" y="756" width="12.9" height="20.3" stroke="#e9e9e9"/><circle cx="1452.8" cy="785.3" r="4.5" stroke="#e9e9e9"/><path d="M1420 752 L1420 766" stroke="#e9e9e9"/><path d="M1420 766 A14 14 0 0 0 1434 752" stroke="#e9e9e9"/><path d="M1376 726 L1376 712" stroke="#e9e9e9"/><path d="M1376 712 A14 14 0 0 1 1390 726" stroke="#e9e9e9"/><path d="M1406.2 686 L1406.2 752" stroke="#e3e3e3"/><path d="M1644.5 597 L1644.5 850" stroke="#e3e3e3"/><path d="M1647 597 L1647 850" stroke="#e9e9e9"/><path d="M1669.5 597 L1669.5 824.4" stroke="#e9e9e9"/><rect x="1647.7" y="758.7" width="107.3" height="37.5" stroke="#e9e9e9"/><rect x="1590" y="633.7" width="57.7" height="36" stroke="#e9e9e9" stroke-dasharray="3 2"/><rect x="1590" y="696.8" width="57.7" height="36" stroke="#e9e9e9" stroke-dasharray="3 2"/><rect x="1590" y="759.7" width="57.7" height="36" stroke="#e9e9e9" stroke-dasharray="3 2"/><rect x="1611.5" y="637" width="35.5" height="33" stroke="#e9e9e9"/><rect x="1611.5" y="700" width="35.5" height="33" stroke="#e9e9e9"/><rect x="1647" y="628" width="7" height="7" stroke="#e9e9e9"/><rect x="1647" y="672" width="7" height="7" stroke="#e9e9e9"/><rect x="1647" y="690" width="7" height="7" stroke="#e9e9e9"/><rect x="1647" y="734" width="7" height="7" stroke="#e9e9e9"/><path d="M1647 827 L1713.4 827" stroke="#e3e3e3"/><path d="M1681.4 827 L1681.4 848" stroke="#e2e2e2"/><path d="M1684.6 827 L1684.6 848" stroke="#e2e2e2"/><path d="M1687.8 827 L1687.8 848" stroke="#e2e2e2"/><path d="M1691.0 827 L1691.0 848" stroke="#e2e2e2"/><path d="M1694.2 827 L1694.2 848" stroke="#e2e2e2"/><path d="M1697.4 827 L1697.4 848" stroke="#e2e2e2"/><path d="M1700.6 827 L1700.6 848" stroke="#e2e2e2"/><path d="M1703.8 827 L1703.8 848" stroke="#e2e2e2"/><path d="M1707.0 827 L1707.0 848" stroke="#e2e2e2"/><path d="M1681 848.5 L1832 848.5" stroke="#e3e3e3"/><rect x="1691" y="848.5" width="135.3" height="21.5" stroke="#e9e9e9"/><rect x="1691.6" y="873" width="27.6" height="26" stroke="#e9e9e9"/><path d="M1647 852 L1647 866" stroke="#e9e9e9"/><path d="M1647 866 A14 14 0 0 0 1661 852" stroke="#e9e9e9"/></g></svg>
<div class="a" style="left:351px;top:100px;width:1677px;height:36px;background:#0052bd;border-radius:5px"></div>
<svg class="i" style="left:363px;top:112.5px" width="10" height="10"><path d="M0 0H10L5 9.5Z" fill="#fff"/></svg>
<div class="t" style="left:377.5px;top:110.4px;font-size:15px;color:#fff;font-weight:normal;">1st Floor</div>
<div class="a" style="left:822.5px;top:102.3px;width:467px;height:31px;background:#fff;border-radius:5px"></div>
<div class="t" style="left:835.6px;top:109.9px;font-size:15px;color:#8c8c8c;font-weight:normal;letter-spacing:-0.1px">Search Devices</div>
<svg class="i" style="left:1890px;top:110.9px" width="12" height="13" viewBox="0 0 12 13"><g fill="none" stroke="#c6d6ee" stroke-width="1.3"><path d="M0.3 2.2H11.7M4 2.2V0.9H8V2.2M1.4 2.2L2 12.2H10L10.6 2.2"/></g><path d="M4.3 4V10.8M6 4V10.8M7.7 4V10.8" stroke="#c6d6ee" stroke-width="0.9"/></svg>
<svg class="i" style="left:1923px;top:111px" width="13" height="13"><circle cx="6.5" cy="6.5" r="6.5" fill="#c6d6ee"/><circle cx="6.6" cy="3.3" r="1.3" fill="#0052bd"/><path d="M4.9 5.4H7.6V9.4H8.5V10.6H4.8V9.4H5.7V6.6H4.9Z" fill="#0052bd"/></svg>
<svg class="i" style="left:1957px;top:111.5px" width="15" height="15" viewBox="0 0 15 15"><path d="M3.6 4.3 A5.7 5.7 0 1 1 2.1 8.6" fill="none" stroke="#c6d6ee" stroke-width="1.9"/><path d="M0.3 1.6 L0.9 7.2 L5.9 4.6Z" fill="#c6d6ee"/></svg>
<svg class="i" style="left:1993.5px;top:110.9px" width="13" height="13" viewBox="0 0 13 13"><path d="M8 0H13V5L11.2 3.2L8.4 6L7 4.6L9.8 1.8Z M5 13H0V8L1.8 9.8L4.6 7L6 8.4L3.2 11.2Z" fill="#c6d6ee"/></svg>
<div class="a" style="left:378px;top:140.2px;width:35.80000000000001px;height:31.8px;border:1.3px solid #3a77cf;border-radius:4px;background:#fff"></div>
<div class="a" style="left:422px;top:140.2px;width:35.80000000000001px;height:31.8px;border-radius:4px;background:#e07572"></div>
<div class="a" style="left:466.2px;top:140.2px;width:35.60000000000002px;height:31.8px;border-radius:4px;background:#e07572"></div>
<div class="a" style="left:510.4px;top:140.2px;width:36.0px;height:31.8px;border:1.3px solid #3a77cf;border-radius:4px;background:#fff"></div>
<div class="a" style="left:555.2px;top:140.2px;width:35.39999999999998px;height:31.8px;border:1.3px solid #3a77cf;border-radius:4px;background:#fff"></div>
<div class="a" style="left:599.4px;top:140.2px;width:35.39999999999998px;height:31.8px;border:1.3px solid #3a77cf;border-radius:4px;background:#fff"></div>
<div class="a" style="left:643.4px;top:140.2px;width:35.700000000000045px;height:31.8px;border:1.3px solid #3a77cf;border-radius:4px;background:#fff"></div>
<div class="a" style="left:688.2px;top:140.2px;width:35.69999999999993px;height:31.8px;border:1.3px solid #3a77cf;border-radius:4px;background:#fff"></div>
<div class="a" style="left:732.3px;top:140.2px;width:36.200000000000045px;height:31.8px;border:1.3px solid #3a77cf;border-radius:4px;background:#fff"></div>
<div class="a" style="left:776.8px;top:140.2px;width:35.80000000000007px;height:31.8px;border:1.3px solid #3a77cf;border-radius:4px;background:#fff"></div>
<div class="a" style="left:821.3px;top:140.2px;width:35.5px;height:31.8px;border:1.3px solid #3a77cf;border-radius:4px;background:#fff"></div>
<div class="a" style="left:869.1px;top:140.2px;width:36.5px;height:31.8px;border-radius:4px;background:#3473c8"></div>
<div class="a" style="left:389.5px;top:151.5px;width:12px;height:8px;background:#2f6fd0"></div><div class="a" style="left:389.5px;top:152.5px;width:12px;height:1px;background:#8fb3ea"></div>
<svg class="i" style="left:433.8px;top:150px" width="12" height="12"><circle cx="6" cy="6" r="5.4" fill="none" stroke="#fff" stroke-width="1.1"/><path d="M4.2 3.4L7.8 8.6M7.8 3.4L4.2 8.6" stroke="#fff" stroke-width="1.1"/></svg>
<svg class="i" style="left:478.8px;top:150.2px" width="11.2" height="13" viewBox="0 0 11.2 13"><g fill="none" stroke="#fff" stroke-width="1.1"><path d="M0.3 2.4H10.9M3.8 2.4V1.2Q3.8 0.5 4.5 0.5H6.7Q7.4 0.5 7.4 1.2V2.4M1.3 2.4L1.9 12Q2 12.5 2.5 12.5H8.7Q9.2 12.5 9.3 12L9.9 2.4M4 4.5V10.5M5.6 4.5V10.5M7.2 4.5V10.5"/></g></svg>
<svg class="i" style="left:522.3px;top:150.2px" width="13" height="12" viewBox="0 0 13 12"><path d="M2.6 3.3 A5 5 0 1 1 2 7.6" fill="none" stroke="#2f6fd0" stroke-width="1.5"/><path d="M0 1.3 L0.6 5.7 L4.6 3.6Z" fill="#2f6fd0"/></svg>
<svg class="i" style="left:566.8px;top:149.8px;transform:rotate(0deg)" width="12" height="12" viewBox="0 0 12 12"><path d="M11 6H1.5M5.6 1.8L1.3 6L5.6 10.2" fill="none" stroke="#2f6fd0" stroke-width="1.5"/></svg>
<svg class="i" style="left:611.2px;top:149.5px;transform:rotate(90deg)" width="12" height="12" viewBox="0 0 12 12"><path d="M11 6H1.5M5.6 1.8L1.3 6L5.6 10.2" fill="none" stroke="#2f6fd0" stroke-width="1.5"/></svg>
<svg class="i" style="left:655.2px;top:150.5px;transform:rotate(-90deg)" width="12" height="12" viewBox="0 0 12 12"><path d="M11 6H1.5M5.6 1.8L1.3 6L5.6 10.2" fill="none" stroke="#2f6fd0" stroke-width="1.5"/></svg>
<svg class="i" style="left:700px;top:149.8px;transform:rotate(180deg)" width="12" height="12" viewBox="0 0 12 12"><path d="M11 6H1.5M5.6 1.8L1.3 6L5.6 10.2" fill="none" stroke="#2f6fd0" stroke-width="1.5"/></svg>
<svg class="i" style="left:743.5px;top:150px" width="14" height="13" viewBox="0 0 14 13"><path d="M3.2 3.6 Q7.5 0 11 3 Q13.5 5.5 12 11" fill="none" stroke="#2f6fd0" stroke-width="1.5"/><path d="M0 1.2 L0.5 6 L5 4.2Z" fill="#2f6fd0"/></svg>
<svg class="i" style="left:788px;top:150px;transform:scaleX(-1)" width="14" height="13" viewBox="0 0 14 13"><path d="M3.2 3.6 Q7.5 0 11 3 Q13.5 5.5 12 11" fill="none" stroke="#2f6fd0" stroke-width="1.5"/><path d="M0 1.2 L0.5 6 L5 4.2Z" fill="#2f6fd0"/></svg>
<svg class="i" style="left:832.5px;top:149.5px" width="13" height="13" viewBox="0 0 13 13"><circle cx="5" cy="5" r="4" fill="none" stroke="#2f6fd0" stroke-width="1.5"/><path d="M3 5H7M5 3V7" stroke="#2f6fd0" stroke-width="1.3"/><path d="M8 8L12 12" stroke="#2f6fd0" stroke-width="2"/></svg>
<svg class="i" style="left:881px;top:149.5px" width="13" height="14" viewBox="0 0 13 14"><path d="M4.8 0.7H8.2V5.8H10.6L6.5 10L2.4 5.8H4.8Z" fill="none" stroke="#fff" stroke-width="1.2"/><path d="M0.5 13H12.5" stroke="#fff" stroke-width="1.3"/></svg>
<div class="a" style="left:1471.4px;top:140.2px;width:36.59999999999991px;height:31.8px;border-radius:4px;background:#f2bb6f"></div>
<div class="a" style="left:1516px;top:140.2px;width:36px;height:31.8px;border:1.3px solid #3a77cf;border-radius:4px;background:#fff"></div>
<div class="a" style="left:1560px;top:140.2px;width:36px;height:31.8px;border-radius:4px;background:#3473c8"></div>
<div class="a" style="left:1603.9px;top:140.2px;width:34.09999999999991px;height:31.8px;border-radius:4px;background:#3473c8"></div>
<div class="a" style="left:1646.4px;top:140.2px;width:36.0px;height:31.8px;border-radius:4px;background:#3473c8"></div>
<div class="a" style="left:1690.6px;top:140.2px;width:38.100000000000136px;height:31.8px;border-radius:4px;background:#3473c8"></div>
<div class="a" style="left:1737px;top:140.2px;width:36.200000000000045px;height:31.8px;border-radius:4px;background:#3473c8"></div>
<div class="a" style="left:1781.3px;top:140.2px;width:36.299999999999955px;height:31.8px;border-radius:4px;background:#3473c8"></div>
<div class="a" style="left:1826px;top:140.2px;width:35.799999999999955px;height:31.8px;border:1.3px solid #3a77cf;border-radius:4px;background:#fff"></div>
<div class="a" style="left:1870.3px;top:140.2px;width:35.5px;height:31.8px;border:1.3px solid #3a77cf;border-radius:4px;background:#fff"></div>
<div class="a" style="left:1914.6px;top:140.2px;width:35.100000000000136px;height:31.8px;border:1.3px solid #e6e6e6;border-radius:4px;background:#fff"></div>
<svg class="i" style="left:1483px;top:150px" width="14" height="12" viewBox="0 0 14 12"><path d="M7 0.3L13.8 11.8H0.2Z" fill="#fff"/><path d="M7 4V8.3" stroke="#f2bb6f" stroke-width="1.2"/><circle cx="7" cy="9.9" r="0.7" fill="#f2bb6f"/></svg>
<svg class="i" style="left:1528px;top:151.5px" width="12" height="9" viewBox="0 0 12 9"><rect y="0" width="12" height="2" fill="#2f6fd0"/><rect y="3.5" width="12" height="2" fill="#2f6fd0"/><rect y="7" width="12" height="2" fill="#2f6fd0"/></svg>
<svg class="i" style="left:1571.5px;top:151.5px;color:#fff" width="14" height="8"><use href="#cam"/></svg>
<svg class="i" style="left:1616px;top:150.3px" width="11" height="13" viewBox="0 0 11 13"><path d="M0.5 12.7V0.5H10.5V12.7" fill="none" stroke="#fff" stroke-width="0.9"/><rect x="1.9" y="1.6" width="7" height="11" fill="#fff"/><circle cx="7.6" cy="7.2" r="0.6" fill="#3473c8"/></svg>
<svg class="i" style="left:1657.4px;top:148.4px" width="14" height="14" viewBox="0 0 14 14"><circle cx="7" cy="7" r="6" fill="none" stroke="#fff" stroke-width="0.9"/><circle cx="7" cy="7" r="2.6" fill="#fff"/></svg>
<svg class="i" style="left:1703px;top:151px" width="14" height="12" viewBox="0 0 14 12"><rect x="0.5" y="0.5" width="10" height="11" fill="none" stroke="#fff" stroke-width="1"/><path d="M5.5 0.5V11.5" stroke="#fff" stroke-width="1"/><path d="M12.5 5L13.3 6.2L12.5 7.4L11.7 6.2Z" fill="#fff"/></svg>
<svg class="i" style="left:1749.5px;top:149px" width="11" height="13" viewBox="0 0 11 13"><g fill="none" stroke="#fff" stroke-width="1"><rect x="5" y="0.5" width="5.3" height="6.5"/><rect x="2.8" y="2.8" width="5.3" height="6.5" fill="#3473c8"/><rect x="0.5" y="5.2" width="5.3" height="7.3" fill="#3473c8"/></g></svg>
<svg class="i" style="left:1792.5px;top:152.3px" width="13" height="7.5" viewBox="0 0 14 8"><rect width="14" height="8" rx="4" fill="#fff"/><circle cx="10" cy="4" r="2.2" fill="#3473c8"/></svg>
<svg class="i" style="left:1837.5px;top:149px" width="12" height="13" viewBox="0 0 12 13"><path d="M1 11V1H6" fill="none" stroke="#7aa3e0" stroke-width="1" stroke-dasharray="2 1"/><rect x="5" y="4" width="6" height="9" fill="#2f6fd0"/><path d="M7.5 1.2H10V3M1 11.5H3" stroke="#7aa3e0" stroke-width="1"/></svg>
<svg class="i" style="left:1881px;top:149.5px" width="13" height="13" viewBox="0 0 13 13"><circle cx="6.5" cy="6.5" r="5.5" fill="none" stroke="#2f6fd0" stroke-width="1.2"/><circle cx="6.5" cy="6.5" r="2.3" fill="none" stroke="#2f6fd0" stroke-width="1.2"/><path d="M6.5 1V4.2M6.5 8.8V12M1 6.5H4.2M8.8 6.5H12" stroke="#2f6fd0" stroke-width="1.2"/></svg>
<svg class="i" style="left:1925.5px;top:150px" width="13" height="13" viewBox="0 0 15 15" style="color:#6f9fe0"><g style="color:#6f9fe0"><use href="#flp"/></g></svg>
<svg class="i" style="left:1966.4px;top:147.6px" width="50" height="50" viewBox="0 0 50 50">
<circle cx="25" cy="25.1" r="15.1" fill="none" stroke="#9d9d9d" stroke-width="2.4"/>
<g fill="#9a9a9a"><polygon points="43.5,6.5 25.0,20.0 7.2,7.2 20.0,25.0 4.1,45.9 25.0,30.0 43.0,43.0 30.0,25.0"/><polygon points="25.0,23.2 38.2,25.0 25.0,26.8"/><polygon points="23.2,25.0 25.0,11.8 26.8,25.0"/><polygon points="25.0,26.8 11.8,25.0 25.0,23.2"/><polygon points="26.8,25.0 25.0,38.2 23.2,25.0"/></g>
<polygon points="25.0,25.0 25.0,20.0 43.5,6.5 30.0,25.0" fill="#f89aa3"/>
<rect x="43.8" y="23.5" width="4" height="3" fill="#a0a0a0" opacity="0.7" transform="rotate(90 45.8 25.0)"/><rect x="43.5" y="3.0" width="4" height="3" fill="#f7a5ad" opacity="0.7" transform="rotate(45 45.5 4.5)"/><rect x="23.0" y="2.7" width="4" height="3" fill="#a0a0a0" opacity="0.7" transform="rotate(0 25.0 4.2)"/><rect x="2.5" y="3.0" width="4" height="3" fill="#a0a0a0" opacity="0.7" transform="rotate(-45 4.5 4.5)"/><rect x="2.2" y="23.5" width="4" height="3" fill="#a0a0a0" opacity="0.7" transform="rotate(-90 4.2 25.0)"/><rect x="2.5" y="44.0" width="4" height="3" fill="#a0a0a0" opacity="0.7" transform="rotate(-135 4.5 45.5)"/><rect x="23.0" y="44.3" width="4" height="3" fill="#a0a0a0" opacity="0.7" transform="rotate(-180 25.0 45.8)"/><rect x="43.5" y="44.0" width="4" height="3" fill="#a0a0a0" opacity="0.7" transform="rotate(-225 45.5 45.5)"/>
</svg>
<svg class="i" style="left:801.7px;top:276.3px" width="20" height="20" viewBox="0 0 20 20"><circle cx="10" cy="10" r="7.6" fill="#fff" stroke="#777" stroke-width="1.5"/></svg>
<svg class="i" style="left:806.7px;top:281.3px" width="10" height="10"><circle cx="5" cy="5" r="3.6" fill="none" stroke="#108a10" stroke-width="1.3"/></svg>
<svg class="i" style="left:802.4px;top:298.6px" width="20" height="20" viewBox="0 0 20 20"><circle cx="10" cy="10" r="7.6" fill="#fff" stroke="#777" stroke-width="1.5"/></svg>
<svg class="i" style="left:807.5px;top:305.6px" width="10" height="6" viewBox="0 0 10 6"><rect x="0.5" y="0.5" width="9" height="5" rx="2.5" fill="none" stroke="#108a10" stroke-width="1"/><circle cx="2.8" cy="3" r="2.2" fill="#108a10"/></svg>
<svg class="i" style="left:576.1px;top:488.8px" width="20" height="20" viewBox="0 0 20 20"><circle cx="10" cy="10" r="7.6" fill="#fff" stroke="#777" stroke-width="1.5"/></svg>
<div class="a" style="left:582.8px;top:494px;width:7px;height:9px;background:#108a10;border-radius:1px 1px 0 0"></div>
<svg class="i" style="left:576.1px;top:511.79999999999995px" width="20" height="20" viewBox="0 0 20 20"><circle cx="10" cy="10" r="7.6" fill="#fff" stroke="#777" stroke-width="1.5"/></svg>
<div class="a" style="left:582.8px;top:517px;width:7px;height:9px;background:#108a10;border-radius:1px 1px 0 0"></div>
<svg class="i" style="left:702.5px;top:470px" width="20" height="20" viewBox="0 0 20 20"><circle cx="10" cy="10" r="6.6" fill="#fff" stroke="#f00" stroke-width="1.8"/><g transform="translate(20 0) scale(-1 1) rotate(12 10 10)"><rect x="5.2" y="7.4" width="7" height="5.2" rx="0.6" fill="#f00"/><path d="M12 9.2L14.8 7.8V12.4L12 11Z" fill="#f00"/></g></svg>
<svg class="i" style="left:655.3px;top:655.4px" width="20" height="20" viewBox="0 0 20 20"><circle cx="10" cy="10" r="6.6" fill="#fff" stroke="#108a10" stroke-width="1.9"/><rect x="6.6" y="7" width="6" height="6" fill="none" stroke="#108a10" stroke-width="1"/><path d="M8.6 7V13M10.6 7V13" stroke="#108a10" stroke-width="0.9"/></svg>
<svg class="i" style="left:565.9px;top:741.1px" width="20" height="20" viewBox="0 0 20 20"><circle cx="10" cy="10" r="5.8" fill="#fff" stroke="#777" stroke-width="1.6"/><path d="M10 5.8 L13.3 7 Q13.3 12 10 14 Q6.7 12 6.7 7Z" fill="#108a10"/><path d="M7.8 12L12.2 7.5" stroke="#fff" stroke-width="0.9"/></svg>
<svg class="i" style="left:1127.1px;top:545.9px" width="24" height="24" viewBox="0 0 24 24"><circle cx="12" cy="12" r="10" fill="#fff" stroke="#f00" stroke-width="2"/><circle cx="12" cy="12" r="7.4" fill="#fff" stroke="#787878" stroke-width="1.8"/><circle cx="12" cy="12" r="8.7" fill="none" stroke="#f88" stroke-width="0.6"/><path d="M12.5 8 L15 9.5 L12.5 15.5 L10 14.5 L9.5 13 Z" fill="#787878" transform="rotate(10 12 12)"/></svg>
<svg class="i" style="left:1174px;top:552.9px" width="24" height="24" viewBox="0 0 24 24"><circle cx="12" cy="12" r="10" fill="#fff" stroke="#f00" stroke-width="2"/><circle cx="12" cy="12" r="7.4" fill="#fff" stroke="#787878" stroke-width="1.8"/><circle cx="12" cy="12" r="8.7" fill="none" stroke="#f88" stroke-width="0.6"/><rect x="7.5" y="9.6" width="7" height="5" rx="0.6" fill="#787878"/><path d="M14 11L16.6 9.6V14.4L14 13Z" fill="#787878"/></svg>
<svg class="i" style="left:1490.6px;top:375.9px" width="20" height="20" viewBox="0 0 20 20"><circle cx="10" cy="10" r="6.9" fill="#fff" stroke="#7a7a7a" stroke-width="1.7"/><rect x="6.3" y="7.3" width="5.9" height="5.4" rx="0.6" fill="#7e7e7e"/><path d="M11.8 9L14.1 7.6V12.4L11.8 11Z" fill="#7e7e7e"/></svg>
<svg class="i" style="left:351px;top:136px" width="16" height="16" viewBox="0 0 16 16"><path d="M0 0H7V7H0Z" fill="#f00"/><circle cx="7" cy="7.4" r="6.2" fill="#fff" stroke="#f00" stroke-width="1.9"/><g transform="rotate(40 7 7.4)"><rect x="3.2" y="5.4" width="5.6" height="4.4" fill="#f00"/><path d="M8.6 6.6L10.8 5.6V9.6L8.6 8.6Z" fill="#f00"/></g></svg>
<div class="a" style="left:1900px;top:891.5px;width:128px;height:61px;border:1px solid #777;background:#fff"></div>
<div class="a" style="left:1902px;top:893.2px;width:74.6px;height:34.6px;background:#737373"></div>
<svg class="i" style="left:2008.4px;top:972px" width="15" height="13" viewBox="0 0 15 13"><path d="M3.5 2.2H1.5Q0.7 2.2 0.7 3V11.5Q0.7 12.3 1.5 12.3H13.2Q14 12.3 14 11.5V3Q14 2.2 13.2 2.2H11.5" fill="none" stroke="#5f6a6e" stroke-width="1.2"/><path d="M7.3 0.3L11 4H8.8V8.8H5.8V4H3.6Z" fill="#5f6a6e"/></svg>
<div class="a" style="left:2033px;top:100px;width:10px;height:24px;overflow:hidden"><svg class="i" style="left:0px;top:2px" width="13" height="15"><use href="#sgnl" style="color:#5f6a6e"/></svg></div>
</body></html>
